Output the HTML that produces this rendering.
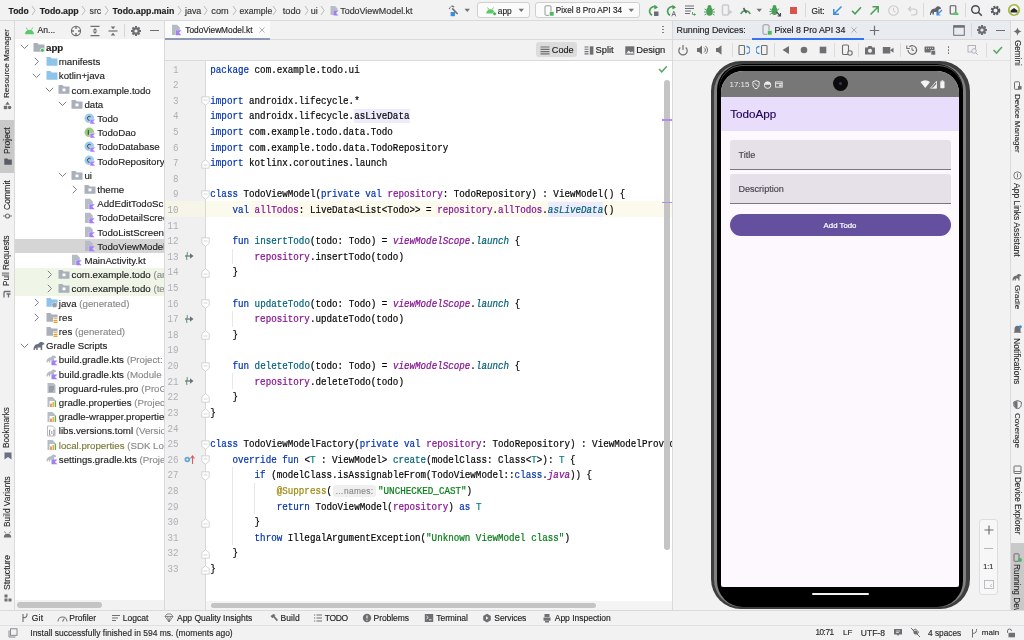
<!DOCTYPE html><html><head><meta charset="utf-8"><style>html,body{margin:0;padding:0;}body{width:1024px;height:640px;overflow:hidden;position:relative;background:#f2f2f2;font-family:"Liberation Sans",sans-serif;}</style></head><body><div style="position:absolute;left:0;top:0;width:1024px;height:640px;will-change:transform;"><div style="position:absolute;left:0px;top:0px;width:1024px;height:20px;background:#f2f2f2;"></div>
<div style="position:absolute;left:0px;top:20px;width:1024px;height:1px;background:#dadada;"></div>
<div style="position:absolute;left:0px;top:21px;width:14px;height:589px;background:#f2f2f2;"></div>
<div style="position:absolute;left:14px;top:21px;width:1px;height:589px;background:#dadada;"></div>
<div style="position:absolute;left:15px;top:21px;width:149px;height:18px;background:#f2f2f2;"></div>
<div style="position:absolute;left:15px;top:39px;width:149px;height:571px;background:#ffffff;"></div>
<div style="position:absolute;left:164px;top:21px;width:1px;height:589px;background:#dadada;"></div>
<div style="position:absolute;left:165px;top:21px;width:507px;height:18px;background:#f2f2f2;"></div>
<div style="position:absolute;left:165px;top:39px;width:507px;height:1px;background:#dadada;"></div>
<div style="position:absolute;left:165px;top:40px;width:507px;height:20px;background:#f2f2f2;"></div>
<div style="position:absolute;left:165px;top:60px;width:507px;height:1px;background:#dadada;"></div>
<div style="position:absolute;left:165px;top:61px;width:40px;height:549px;background:#f0f0f0;"></div>
<div style="position:absolute;left:205px;top:61px;width:1px;height:549px;background:#d9d9d9;"></div>
<div style="position:absolute;left:206px;top:61px;width:466px;height:549px;background:#ffffff;"></div>
<div style="position:absolute;left:672px;top:21px;width:1px;height:589px;background:#dadada;"></div>
<div style="position:absolute;left:673px;top:21px;width:337px;height:18px;background:#e8ebf0;"></div>
<div style="position:absolute;left:673px;top:39px;width:337px;height:1px;background:#dadada;"></div>
<div style="position:absolute;left:673px;top:40px;width:337px;height:20px;background:#f2f2f2;"></div>
<div style="position:absolute;left:673px;top:60px;width:337px;height:1px;background:#e2e2e2;"></div>
<div style="position:absolute;left:673px;top:61px;width:337px;height:549px;background:#f2f2f2;"></div>
<div style="position:absolute;left:1010px;top:21px;width:1px;height:589px;background:#dadada;"></div>
<div style="position:absolute;left:1011px;top:21px;width:13px;height:589px;background:#f2f2f2;"></div>
<div style="position:absolute;left:0px;top:610px;width:1024px;height:1px;background:#dadada;"></div>
<div style="position:absolute;left:0px;top:611px;width:1024px;height:14px;background:#f2f2f2;"></div>
<div style="position:absolute;left:0px;top:625px;width:1024px;height:1px;background:#e0e0e0;"></div>
<div style="position:absolute;left:0px;top:626px;width:1024px;height:14px;background:#f2f2f2;"></div>
<div style="position:absolute;left:8.6px;top:0.5999999999999996px;height:20px;line-height:20px;font-family:'Liberation Sans',sans-serif;font-size:8.5px;color:#1f1f1f;font-weight:bold;white-space:pre;-webkit-text-stroke:0.15px currentColor;">Todo</div>
<svg style="position:absolute;left:31.200000000000003px;top:4.5px;" width="5.2" height="11" viewBox="0 0 5.2 11"><polyline points="1,1 4.2,5.5 1,10" fill="none" stroke="#b4b4b4" stroke-width="0.9"/></svg>
<div style="position:absolute;left:39.8px;top:0.5999999999999996px;height:20px;line-height:20px;font-family:'Liberation Sans',sans-serif;font-size:8.8px;color:#1f1f1f;font-weight:bold;white-space:pre;-webkit-text-stroke:0.15px currentColor;">Todo.app</div>
<svg style="position:absolute;left:81.2px;top:4.5px;" width="5.2" height="11" viewBox="0 0 5.2 11"><polyline points="1,1 4.2,5.5 1,10" fill="none" stroke="#b4b4b4" stroke-width="0.9"/></svg>
<div style="position:absolute;left:89.6px;top:0.5999999999999996px;height:20px;line-height:20px;font-family:'Liberation Sans',sans-serif;font-size:8.7px;color:#333;font-weight:normal;white-space:pre;-webkit-text-stroke:0.15px currentColor;">src</div>
<svg style="position:absolute;left:103.8px;top:4.5px;" width="5.2" height="11" viewBox="0 0 5.2 11"><polyline points="1,1 4.2,5.5 1,10" fill="none" stroke="#b4b4b4" stroke-width="0.9"/></svg>
<div style="position:absolute;left:112.6px;top:0.5999999999999996px;height:20px;line-height:20px;font-family:'Liberation Sans',sans-serif;font-size:8.78px;color:#1f1f1f;font-weight:bold;white-space:pre;-webkit-text-stroke:0.15px currentColor;">Todo.app.main</div>
<svg style="position:absolute;left:177px;top:4.5px;" width="5.2" height="11" viewBox="0 0 5.2 11"><polyline points="1,1 4.2,5.5 1,10" fill="none" stroke="#b4b4b4" stroke-width="0.9"/></svg>
<div style="position:absolute;left:185px;top:0.5999999999999996px;height:20px;line-height:20px;font-family:'Liberation Sans',sans-serif;font-size:8.9px;color:#333;font-weight:normal;white-space:pre;-webkit-text-stroke:0.15px currentColor;">java</div>
<svg style="position:absolute;left:202.9px;top:4.5px;" width="5.2" height="11" viewBox="0 0 5.2 11"><polyline points="1,1 4.2,5.5 1,10" fill="none" stroke="#b4b4b4" stroke-width="0.9"/></svg>
<div style="position:absolute;left:211.3px;top:0.5999999999999996px;height:20px;line-height:20px;font-family:'Liberation Sans',sans-serif;font-size:9.2px;color:#333;font-weight:normal;white-space:pre;-webkit-text-stroke:0.15px currentColor;">com</div>
<svg style="position:absolute;left:231.7px;top:4.5px;" width="5.2" height="11" viewBox="0 0 5.2 11"><polyline points="1,1 4.2,5.5 1,10" fill="none" stroke="#b4b4b4" stroke-width="0.9"/></svg>
<div style="position:absolute;left:239.5px;top:0.5999999999999996px;height:20px;line-height:20px;font-family:'Liberation Sans',sans-serif;font-size:8.7px;color:#333;font-weight:normal;white-space:pre;-webkit-text-stroke:0.15px currentColor;">example</div>
<svg style="position:absolute;left:272px;top:4.5px;" width="5.2" height="11" viewBox="0 0 5.2 11"><polyline points="1,1 4.2,5.5 1,10" fill="none" stroke="#b4b4b4" stroke-width="0.9"/></svg>
<div style="position:absolute;left:282.7px;top:0.5999999999999996px;height:20px;line-height:20px;font-family:'Liberation Sans',sans-serif;font-size:9.3px;color:#333;font-weight:normal;white-space:pre;-webkit-text-stroke:0.15px currentColor;">todo</div>
<svg style="position:absolute;left:303.7px;top:4.5px;" width="5.2" height="11" viewBox="0 0 5.2 11"><polyline points="1,1 4.2,5.5 1,10" fill="none" stroke="#b4b4b4" stroke-width="0.9"/></svg>
<div style="position:absolute;left:310.8px;top:0.5999999999999996px;height:20px;line-height:20px;font-family:'Liberation Sans',sans-serif;font-size:9px;color:#333;font-weight:normal;white-space:pre;-webkit-text-stroke:0.15px currentColor;">ui</div>
<svg style="position:absolute;left:320.1px;top:4.5px;" width="5.2" height="11" viewBox="0 0 5.2 11"><polyline points="1,1 4.2,5.5 1,10" fill="none" stroke="#b4b4b4" stroke-width="0.9"/></svg>
<svg style="position:absolute;left:328.5px;top:4.5px;" width="10" height="11" viewBox="0 0 10 11"><path d="M1.5 1 h4.5 l2.5 2.5 v2 h-4 v4.5 h-3 z" fill="#b8bcc4"/><path d="M4.5 5.5 h5 l-2.5 2.5 l2.5 2.5 h-5 z" fill="#9f7ff0"/></svg>
<div style="position:absolute;left:340.2px;top:0.5999999999999996px;height:20px;line-height:20px;font-family:'Liberation Sans',sans-serif;font-size:8.95px;color:#333;font-weight:normal;white-space:pre;-webkit-text-stroke:0.15px currentColor;">TodoViewModel.kt</div>
<svg style="position:absolute;left:447px;top:4px;" width="13" height="13" viewBox="0 0 13 13"><path d="M1.6 4.6 L5 1.2 L7.6 2.6 L6.8 3.4 L4 2.6 L2.6 5.6 Z" fill="#6f737a"/><path d="M5.2 4.4 L10.6 10" stroke="#6f737a" stroke-width="1.7"/><rect x="3.6" y="8" width="4.4" height="4.2" fill="#3d8ee0"/></svg>
<svg style="position:absolute;left:463.5px;top:8px;" width="7" height="5" viewBox="0 0 7 5"><path d="M0.5 0.8 h5.5 l-2.75 3.2 z" fill="#6f737a"/></svg>
<div style="position:absolute;left:477.4px;top:2.4px;width:52.5px;height:15.2px;box-sizing:border-box;border:1px solid #cfcfcf;border-radius:3px;background:#fbfbfb;"></div>
<svg style="position:absolute;left:485px;top:5px;" width="12" height="11" viewBox="0 0 12 11"><path d="M1.2 8.5 a4.3 4.3 0 0 1 8.6 0 z" fill="#5cc86b"/><line x1="2.5" y1="2.5" x2="3.8" y2="4.5" stroke="#5cc86b" stroke-width="0.9"/><line x1="8.5" y1="2.5" x2="7.2" y2="4.5" stroke="#5cc86b" stroke-width="0.9"/><circle cx="9.6" cy="8.8" r="1.8" fill="#3cae4e" stroke="#fbfbfb" stroke-width="0.6"/></svg>
<div style="position:absolute;left:497.8px;top:0.5999999999999996px;height:20px;line-height:20px;font-family:'Liberation Sans',sans-serif;font-size:8.35px;color:#1f1f1f;font-weight:normal;white-space:pre;-webkit-text-stroke:0.15px currentColor;">app</div>
<svg style="position:absolute;left:517.5px;top:8px;" width="7" height="5" viewBox="0 0 7 5"><path d="M0.5 0.8 h5.5 l-2.75 3.2 z" fill="#6f737a"/></svg>
<div style="position:absolute;left:535.3px;top:2.4px;width:105px;height:15.2px;box-sizing:border-box;border:1px solid #cfcfcf;border-radius:3px;background:#fbfbfb;"></div>
<svg style="position:absolute;left:543.5px;top:4.5px;" width="11" height="12" viewBox="0 0 11 12"><rect x="1" y="0.8" width="6" height="9.5" rx="1" fill="none" stroke="#8a8e95" stroke-width="0.9"/><rect x="5.5" y="6.5" width="4.5" height="4.5" fill="#4cb85c" stroke="#fbfbfb" stroke-width="0.6"/></svg>
<div style="position:absolute;left:555.8px;top:0.5999999999999996px;height:20px;line-height:20px;font-family:'Liberation Sans',sans-serif;font-size:8.22px;color:#1f1f1f;font-weight:normal;white-space:pre;-webkit-text-stroke:0.15px currentColor;">Pixel 8 Pro API 34</div>
<svg style="position:absolute;left:628px;top:8px;" width="7" height="5" viewBox="0 0 7 5"><path d="M0.5 0.8 h5.5 l-2.75 3.2 z" fill="#6f737a"/></svg>
<svg style="position:absolute;left:647px;top:4px;" width="13" height="13" viewBox="0 0 13 13"><path d="M9.5 3.2 A4.6 4.6 0 1 0 5 11.3" fill="none" stroke="#4a9e57" stroke-width="1.6"/><path d="M7.5 0.8 l3.6 2.6 l-3.8 2 z" fill="#4a9e57"/><rect x="7" y="7.5" width="4.5" height="4.5" fill="#6a6e74"/></svg>
<svg style="position:absolute;left:665px;top:4px;" width="13" height="13" viewBox="0 0 13 13"><path d="M9.5 3.2 A4.6 4.6 0 1 0 5 11.3" fill="none" stroke="#4a9e57" stroke-width="1.6"/><path d="M7.5 0.8 l3.6 2.6 l-3.8 2 z" fill="#4a9e57"/><path d="M6.8 12.3 l2 -5 l2 5 M7.6 10.5 h2.4" fill="none" stroke="#6a6e74" stroke-width="0.9"/></svg>
<svg style="position:absolute;left:684px;top:4px;" width="13" height="13" viewBox="0 0 13 13"><path d="M1 2 h9 M1 4.5 h9 M1 7 h6 M1 9.5 h5" stroke="#6a6e74" stroke-width="1.2"/><path d="M8.5 8 v2.5 h3 M10 9.5 l1.5 1 l-1.5 1" fill="none" stroke="#4a9e57" stroke-width="0.9"/></svg>
<svg style="position:absolute;left:702.5px;top:4px;" width="13" height="13" viewBox="0 0 13 13"><ellipse cx="6.5" cy="7.5" rx="3.3" ry="4.2" fill="#4a9e57"/><circle cx="6.5" cy="3" r="2" fill="#4a9e57"/><path d="M1.5 5 l2 1.2 M11.5 5 l-2 1.2 M1 8 h2 M12 8 h-2 M1.5 11 l2 -1.2 M11.5 11 l-2 -1.2" stroke="#4a9e57" stroke-width="1"/></svg>
<svg style="position:absolute;left:720.5px;top:4px;" width="13" height="13" viewBox="0 0 13 13"><rect x="1.5" y="1" width="6" height="10" rx="1" fill="none" stroke="#c9cbcf" stroke-width="1.5"/><path d="M7 5 l4.5 3 l-4.5 3 z" fill="#c9cbcf"/></svg>
<svg style="position:absolute;left:739px;top:4px;" width="13" height="13" viewBox="0 0 13 13"><path d="M1.8 10 A5 5 0 0 1 11.2 10" fill="none" stroke="#4a9e57" stroke-width="1.6"/><path d="M4.5 4 l3 5" stroke="#55585e" stroke-width="1.6"/></svg>
<svg style="position:absolute;left:756px;top:8px;" width="7" height="5" viewBox="0 0 7 5"><path d="M0.5 0.8 h5.5 l-2.75 3.2 z" fill="#6f737a"/></svg>
<svg style="position:absolute;left:769px;top:4px;" width="13" height="13" viewBox="0 0 13 13"><ellipse cx="5.5" cy="7" rx="3" ry="4" fill="#4a9e57"/><circle cx="5.5" cy="2.8" r="1.9" fill="#4a9e57"/><path d="M0.8 4.8 l2 1.2 M10.2 4.8 l-2 1.2 M0.5 7.5 h2 M0.8 10.5 l2 -1.2" stroke="#4a9e57" stroke-width="1"/><path d="M7.5 8 l4 4 M8.5 12 h3 v-3" fill="none" stroke="#45484e" stroke-width="1.1"/></svg>
<div style="position:absolute;left:789.8px;top:6.6px;width:7px;height:7px;background:#d9544f;"></div>
<div style="position:absolute;left:805.3px;top:3px;width:1px;height:14px;background:#d9d9d9;"></div>
<div style="position:absolute;left:811.6px;top:0.5999999999999996px;height:20px;line-height:20px;font-family:'Liberation Sans',sans-serif;font-size:8.3px;color:#1f1f1f;font-weight:normal;white-space:pre;-webkit-text-stroke:0.15px currentColor;">Git:</div>
<svg style="position:absolute;left:831px;top:4px;" width="13" height="13" viewBox="0 0 13 13"><path d="M10.5 2.5 L3 10 M2.8 5 v5.2 h5.2" fill="none" stroke="#3d8ee0" stroke-width="1.5"/></svg>
<svg style="position:absolute;left:850px;top:4px;" width="13" height="13" viewBox="0 0 13 13"><path d="M2 6.8 l3 3 l6 -6.5" fill="none" stroke="#4a9e57" stroke-width="1.6"/></svg>
<svg style="position:absolute;left:867.5px;top:4px;" width="13" height="13" viewBox="0 0 13 13"><path d="M2.5 10.5 L10 3 M4.5 2.8 h5.7 v5.7" fill="none" stroke="#4a9e57" stroke-width="1.5"/></svg>
<svg style="position:absolute;left:886.5px;top:4px;" width="13" height="13" viewBox="0 0 13 13"><circle cx="6.5" cy="6.5" r="4.8" fill="none" stroke="#c8cacd" stroke-width="1.1"/><path d="M6.5 3.8 v3 l2 1.3" fill="none" stroke="#c8cacd" stroke-width="1"/></svg>
<svg style="position:absolute;left:905.5px;top:4px;" width="13" height="13" viewBox="0 0 13 13"><path d="M3 5 h5 a3 3 0 0 1 0 6 h-3" fill="none" stroke="#c8cacd" stroke-width="1.2"/><path d="M5 2.5 l-2.5 2.5 l2.5 2.5" fill="none" stroke="#c8cacd" stroke-width="1.2"/></svg>
<div style="position:absolute;left:922.8px;top:3px;width:1px;height:14px;background:#d9d9d9;"></div>
<svg style="position:absolute;left:928.5px;top:4px;" width="14" height="13" viewBox="0 0 14 13"><path d="M1 11 c0-3 1-6.5 5-6.5 l2 -2 c2 -0.5 4 0.5 4 2.5 c-1 0 -2 0 -2.5 1 v4.5 h-1.5 v-2.5 h-3 v2.5 h-1.5 v-2 c-1 0 -1.5 1 -1.5 2.5 z" fill="#5f6369"/><path d="M13 6 L8 11 M8 7.6 v3.4 h3.4" fill="none" stroke="#3d8ee0" stroke-width="1.2"/></svg>
<svg style="position:absolute;left:947px;top:4px;" width="13" height="13" viewBox="0 0 13 13"><rect x="3.2" y="1.8" width="5.6" height="8.2" rx="0.8" fill="none" stroke="#55585e" stroke-width="1.1"/><path d="M5.6 11 a3 3 0 0 1 6 0 z" fill="#5cc86b"/></svg>
<div style="position:absolute;left:965.3px;top:3px;width:1px;height:14px;background:#d9d9d9;"></div>
<svg style="position:absolute;left:970px;top:4px;" width="13" height="13" viewBox="0 0 13 13"><circle cx="5.5" cy="5.5" r="3.8" fill="none" stroke="#45484e" stroke-width="1.4"/><path d="M8.3 8.3 l3.5 3.5" stroke="#45484e" stroke-width="1.6"/></svg>
<svg style="position:absolute;left:988.5px;top:3.5px;" width="13" height="13" viewBox="0 0 13 13"><circle cx="6.5" cy="6.5" r="3.6" fill="none" stroke="#55585e" stroke-width="2.4" stroke-dasharray="1.9 1"/><circle cx="6.5" cy="6.5" r="2.7" fill="none" stroke="#55585e" stroke-width="1.3"/></svg>
<svg style="position:absolute;left:1006.8px;top:3.4px;" width="14" height="14" viewBox="0 0 14 14"><circle cx="7" cy="7" r="6.1" fill="#a3b845"/><circle cx="7" cy="7" r="4.4" fill="#f6f6f2"/><path d="M3.6 9.6 v-2 l3.4 -2.6 l3.4 2.6 v2 z" fill="#262626"/></svg>
<div style="position:absolute;left:0px;top:120px;width:14px;height:52.7px;background:#c9c9c9;"></div>
<div style="position:absolute;left:7.3px;top:97.9px;width:0;height:0;"><div style="position:absolute;left:0;top:0;transform-origin:0 0;transform:rotate(-90deg);white-space:pre;font-family:'Liberation Sans',sans-serif;font-size:8.1px;color:#2a2a2a;line-height:12px;-webkit-text-stroke:0.12px currentColor;"><div style="position:relative;top:-6px">Resource Manager</div></div></div>
<div style="position:absolute;left:7.3px;top:153.5px;width:0;height:0;"><div style="position:absolute;left:0;top:0;transform-origin:0 0;transform:rotate(-90deg);white-space:pre;font-family:'Liberation Sans',sans-serif;font-size:8.58px;color:#2a2a2a;line-height:12px;-webkit-text-stroke:0.12px currentColor;"><div style="position:relative;top:-6px">Project</div></div></div>
<div style="position:absolute;left:7.3px;top:210px;width:0;height:0;"><div style="position:absolute;left:0;top:0;transform-origin:0 0;transform:rotate(-90deg);white-space:pre;font-family:'Liberation Sans',sans-serif;font-size:8.65px;color:#2a2a2a;line-height:12px;-webkit-text-stroke:0.12px currentColor;"><div style="position:relative;top:-6px">Commit</div></div></div>
<div style="position:absolute;left:7.3px;top:286.3px;width:0;height:0;"><div style="position:absolute;left:0;top:0;transform-origin:0 0;transform:rotate(-90deg);white-space:pre;font-family:'Liberation Sans',sans-serif;font-size:8.23px;color:#2a2a2a;line-height:12px;-webkit-text-stroke:0.12px currentColor;"><div style="position:relative;top:-6px">Pull Requests</div></div></div>
<div style="position:absolute;left:7.3px;top:447.5px;width:0;height:0;"><div style="position:absolute;left:0;top:0;transform-origin:0 0;transform:rotate(-90deg);white-space:pre;font-family:'Liberation Sans',sans-serif;font-size:8.2px;color:#2a2a2a;line-height:12px;-webkit-text-stroke:0.12px currentColor;"><div style="position:relative;top:-6px">Bookmarks</div></div></div>
<div style="position:absolute;left:7.3px;top:527px;width:0;height:0;"><div style="position:absolute;left:0;top:0;transform-origin:0 0;transform:rotate(-90deg);white-space:pre;font-family:'Liberation Sans',sans-serif;font-size:8.33px;color:#2a2a2a;line-height:12px;-webkit-text-stroke:0.12px currentColor;"><div style="position:relative;top:-6px">Build Variants</div></div></div>
<div style="position:absolute;left:7.3px;top:590px;width:0;height:0;"><div style="position:absolute;left:0;top:0;transform-origin:0 0;transform:rotate(-90deg);white-space:pre;font-family:'Liberation Sans',sans-serif;font-size:8.65px;color:#2a2a2a;line-height:12px;-webkit-text-stroke:0.12px currentColor;"><div style="position:relative;top:-6px">Structure</div></div></div>
<svg style="position:absolute;left:3px;top:101px;" width="9" height="9" viewBox="0 0 9 9"><path d="M4.5 0.5 l2.2 3.3 h-4.4 z" fill="#6e6f73"/><rect x="0.8" y="4.8" width="3.4" height="3.4" fill="#6e6f73"/><circle cx="6.6" cy="6.5" r="1.8" fill="#6e6f73"/></svg>
<svg style="position:absolute;left:3.5px;top:157.5px;" width="8" height="7" viewBox="0 0 8 7"><path d="M0.3 0.5 h3 l1 1 h3.5 v5.3 h-7.5 z" fill="#5a5d63"/></svg>
<svg style="position:absolute;left:3px;top:212px;" width="9" height="8" viewBox="0 0 9 8"><circle cx="4.5" cy="4" r="2" fill="none" stroke="#6e6f73" stroke-width="1.1"/><path d="M0 4 h2.5 M6.5 4 h2.5" stroke="#6e6f73" stroke-width="1.1"/></svg>
<svg style="position:absolute;left:3px;top:289.5px;" width="9" height="8" viewBox="0 0 9 8"><path d="M1 1.5 h6.5 M1 1.5 v6 M3.5 4 h4 M5.5 4 v3.5" fill="none" stroke="#6e6f73" stroke-width="1.3"/></svg>
<svg style="position:absolute;left:3.5px;top:451.5px;" width="8" height="8" viewBox="0 0 8 8"><path d="M0.5 0.5 h7 v7 l-3.5 -2.5 l-3.5 2.5 z" fill="#6c707e"/></svg>
<svg style="position:absolute;left:3px;top:531px;" width="9" height="7" viewBox="0 0 9 7"><path d="M0.8 6.5 a3.7 3.7 0 0 1 7.4 0 z" fill="#6e6f73"/><path d="M1.5 0.5 l1.3 2 M7.5 0.5 l-1.3 2" stroke="#6e6f73" stroke-width="0.9"/></svg>
<svg style="position:absolute;left:3.5px;top:593.5px;" width="8" height="8" viewBox="0 0 8 8"><rect x="0.5" y="0.5" width="3" height="3" fill="#6e6f73"/><rect x="4.5" y="4.5" width="3" height="3" fill="#6e6f73"/><rect x="0.5" y="4.5" width="3" height="3" fill="#6e6f73"/></svg>
<svg style="position:absolute;left:23.5px;top:25.5px;" width="11" height="9" viewBox="0 0 11 9"><path d="M1 8.3 a4.5 4.5 0 0 1 9 0 z" fill="#5cc86b"/><path d="M2.2 1.5 l1.3 2.2 M8.8 1.5 l-1.3 2.2" stroke="#5cc86b" stroke-width="0.9"/></svg>
<div style="position:absolute;left:37.5px;top:20.3px;height:20px;line-height:20px;font-family:'Liberation Sans',sans-serif;font-size:8.6px;color:#2a2a2a;font-weight:normal;white-space:pre;-webkit-text-stroke:0.15px currentColor;">An...</div>
<svg style="position:absolute;left:69.5px;top:24.5px;" width="12" height="12" viewBox="0 0 12 12"><circle cx="6" cy="6" r="4.6" fill="none" stroke="#6e6f73" stroke-width="1.1"/><path d="M6 1.4 v2.6 M6 8 v2.6 M1.4 6 h2.6 M8 6 h2.6" stroke="#6e6f73" stroke-width="1.3"/></svg>
<svg style="position:absolute;left:88.5px;top:24.5px;" width="12" height="12" viewBox="0 0 12 12"><path d="M1.5 1.3 h9 M1.5 10.7 h9" stroke="#6e6f73" stroke-width="1.2"/><path d="M6 3 L8.3 5.4 H3.7 Z M3.7 6.6 H8.3 L6 9 Z" fill="#6e6f73"/></svg>
<svg style="position:absolute;left:106.5px;top:24.5px;" width="12" height="12" viewBox="0 0 12 12"><path d="M1.5 6 h9" stroke="#6e6f73" stroke-width="1.2"/><path d="M3.7 1.4 H8.3 L6 4.2 Z M6 7.8 L8.3 10.6 H3.7 Z" fill="#6e6f73"/></svg>
<div style="position:absolute;left:124.3px;top:24px;width:1px;height:13px;background:#d6d6d6;"></div>
<svg style="position:absolute;left:130px;top:24.5px;" width="12" height="12" viewBox="0 0 12 12"><rect x="5" y="1" width="2" height="2.5" fill="#6e6f73" transform="rotate(0 6 6)"/><rect x="5" y="1" width="2" height="2.5" fill="#6e6f73" transform="rotate(45 6 6)"/><rect x="5" y="1" width="2" height="2.5" fill="#6e6f73" transform="rotate(90 6 6)"/><rect x="5" y="1" width="2" height="2.5" fill="#6e6f73" transform="rotate(135 6 6)"/><rect x="5" y="1" width="2" height="2.5" fill="#6e6f73" transform="rotate(180 6 6)"/><rect x="5" y="1" width="2" height="2.5" fill="#6e6f73" transform="rotate(225 6 6)"/><rect x="5" y="1" width="2" height="2.5" fill="#6e6f73" transform="rotate(270 6 6)"/><rect x="5" y="1" width="2" height="2.5" fill="#6e6f73" transform="rotate(315 6 6)"/><circle cx="6" cy="6" r="3.8" fill="#6e6f73"/><circle cx="6" cy="6" r="1.6" fill="#f2f2f2"/></svg>
<div style="position:absolute;left:149.5px;top:30px;width:9.5px;height:1.1px;background:#6e6f73;"></div>
<div style="position:absolute;left:15px;top:39px;width:149px;height:571px;overflow:hidden;">
<div style="position:absolute;left:0;top:200.29999999999998px;width:149px;height:14.0px;background:#d5d5d5;"></div>
<div style="position:absolute;left:0;top:228.7px;width:149px;height:14.0px;background:#eff6e8;"></div>
<div style="position:absolute;left:0;top:242.89999999999998px;width:149px;height:14.0px;background:#eff6e8;"></div>
<svg style="position:absolute;left:4.600000000000001px;top:5.299999999999997px" width="9" height="6" viewBox="0 0 9 6"><polyline points="0.8,0.8 4.5,4.5 8.2,0.8" fill="none" stroke="#7e8189" stroke-width="1"/></svg>
<svg style="position:absolute;left:17.7px;top:2.799999999999997px" width="12" height="11" viewBox="0 0 12 11"><path d="M0.5 1 h4 l1.2 1.4 h5.8 v7.3 h-11 z" fill="#a9b0ba"/><circle cx="9.3" cy="8.3" r="2" fill="#4cb85c" stroke="#fff" stroke-width="0.7"/></svg>
<div style="position:absolute;left:31.0px;top:-1.0000000000000036px;height:20px;line-height:20px;font-family:'Liberation Sans',sans-serif;font-size:9.7px;color:#1e1e1e;font-weight:bold;white-space:pre;-webkit-text-stroke:0.15px currentColor;"><span style="color:#1e1e1e">app</span></div>
<svg style="position:absolute;left:18.9px;top:18.0px" width="6" height="9" viewBox="0 0 6 9"><polyline points="0.8,0.8 4.5,4.5 0.8,8.2" fill="none" stroke="#7e8189" stroke-width="1"/></svg>
<svg style="position:absolute;left:30.499999999999996px;top:17.0px" width="12" height="11" viewBox="0 0 12 11"><path d="M0.5 1 h4 l1.2 1.4 h5.8 v7.3 h-11 z" fill="#8fc4ea"/></svg>
<div style="position:absolute;left:43.8px;top:13.2px;height:20px;line-height:20px;font-family:'Liberation Sans',sans-serif;font-size:9.7px;color:#1e1e1e;font-weight:normal;white-space:pre;-webkit-text-stroke:0.15px currentColor;"><span style="color:#1e1e1e">manifests</span></div>
<svg style="position:absolute;left:17.4px;top:33.69999999999999px" width="9" height="6" viewBox="0 0 9 6"><polyline points="0.8,0.8 4.5,4.5 8.2,0.8" fill="none" stroke="#7e8189" stroke-width="1"/></svg>
<svg style="position:absolute;left:30.499999999999996px;top:31.19999999999999px" width="12" height="11" viewBox="0 0 12 11"><path d="M0.5 1 h4 l1.2 1.4 h5.8 v7.3 h-11 z" fill="#8fc4ea"/></svg>
<div style="position:absolute;left:43.8px;top:27.39999999999999px;height:20px;line-height:20px;font-family:'Liberation Sans',sans-serif;font-size:9.7px;color:#1e1e1e;font-weight:normal;white-space:pre;-webkit-text-stroke:0.15px currentColor;"><span style="color:#1e1e1e">kotlin+java</span></div>
<svg style="position:absolute;left:30.199999999999996px;top:47.89999999999999px" width="9" height="6" viewBox="0 0 9 6"><polyline points="0.8,0.8 4.5,4.5 8.2,0.8" fill="none" stroke="#7e8189" stroke-width="1"/></svg>
<svg style="position:absolute;left:43.3px;top:45.39999999999999px" width="12" height="11" viewBox="0 0 12 11"><path d="M0.5 1 h4 l1.2 1.4 h5.8 v7.3 h-11 z" fill="#a9b0ba"/><rect x="4.5" y="4.5" width="3" height="2.8" fill="#ffffff"/></svg>
<div style="position:absolute;left:56.599999999999994px;top:41.599999999999994px;height:20px;line-height:20px;font-family:'Liberation Sans',sans-serif;font-size:9.7px;color:#1e1e1e;font-weight:normal;white-space:pre;-webkit-text-stroke:0.15px currentColor;"><span style="color:#1e1e1e">com.example.todo</span></div>
<svg style="position:absolute;left:43.00000000000001px;top:62.099999999999994px" width="9" height="6" viewBox="0 0 9 6"><polyline points="0.8,0.8 4.5,4.5 8.2,0.8" fill="none" stroke="#7e8189" stroke-width="1"/></svg>
<svg style="position:absolute;left:56.10000000000001px;top:59.599999999999994px" width="12" height="11" viewBox="0 0 12 11"><path d="M0.5 1 h4 l1.2 1.4 h5.8 v7.3 h-11 z" fill="#a9b0ba"/><rect x="4.5" y="4.5" width="3" height="2.8" fill="#ffffff"/></svg>
<div style="position:absolute;left:69.4px;top:55.8px;height:20px;line-height:20px;font-family:'Liberation Sans',sans-serif;font-size:9.7px;color:#1e1e1e;font-weight:normal;white-space:pre;-webkit-text-stroke:0.15px currentColor;"><span style="color:#1e1e1e">data</span></div>
<svg style="position:absolute;left:68.9px;top:73.8px" width="12" height="12" viewBox="0 0 12 12"><circle cx="5.3" cy="5.3" r="4.8" fill="#9ccdec"/><path d="M6.6 3.7 a2 2 0 1 0 0 3.2" fill="none" stroke="#3f434a" stroke-width="1"/><path d="M6 6.2 h5.5 l-2.3 2.4 l2.3 2.4 h-5.5 z" fill="#a87ff5" stroke="#fff" stroke-width="0.5"/></svg>
<div style="position:absolute;left:82.2px;top:70.0px;height:20px;line-height:20px;font-family:'Liberation Sans',sans-serif;font-size:9.7px;color:#1e1e1e;font-weight:normal;white-space:pre;-webkit-text-stroke:0.15px currentColor;"><span style="color:#1e1e1e">Todo</span></div>
<svg style="position:absolute;left:68.9px;top:88.0px" width="12" height="12" viewBox="0 0 12 12"><circle cx="5.3" cy="5.3" r="4.8" fill="#9dcc86"/><path d="M4.3 3 v4.8" stroke="#3f434a" stroke-width="1.1"/><path d="M6 6.2 h5.5 l-2.3 2.4 l2.3 2.4 h-5.5 z" fill="#a87ff5" stroke="#fff" stroke-width="0.5"/></svg>
<div style="position:absolute;left:82.2px;top:84.2px;height:20px;line-height:20px;font-family:'Liberation Sans',sans-serif;font-size:9.7px;color:#1e1e1e;font-weight:normal;white-space:pre;-webkit-text-stroke:0.15px currentColor;"><span style="color:#1e1e1e">TodoDao</span></div>
<svg style="position:absolute;left:68.9px;top:102.19999999999999px" width="12" height="12" viewBox="0 0 12 12"><circle cx="5.3" cy="5.3" r="4.8" fill="#9ccdec"/><path d="M6.6 3.7 a2 2 0 1 0 0 3.2" fill="none" stroke="#3f434a" stroke-width="1"/><path d="M6 6.2 h5.5 l-2.3 2.4 l2.3 2.4 h-5.5 z" fill="#a87ff5" stroke="#fff" stroke-width="0.5"/></svg>
<div style="position:absolute;left:82.2px;top:98.39999999999999px;height:20px;line-height:20px;font-family:'Liberation Sans',sans-serif;font-size:9.7px;color:#1e1e1e;font-weight:normal;white-space:pre;-webkit-text-stroke:0.15px currentColor;"><span style="color:#1e1e1e">TodoDatabase</span></div>
<svg style="position:absolute;left:68.9px;top:116.39999999999998px" width="12" height="12" viewBox="0 0 12 12"><circle cx="5.3" cy="5.3" r="4.8" fill="#9ccdec"/><path d="M6.6 3.7 a2 2 0 1 0 0 3.2" fill="none" stroke="#3f434a" stroke-width="1"/><path d="M6 6.2 h5.5 l-2.3 2.4 l2.3 2.4 h-5.5 z" fill="#a87ff5" stroke="#fff" stroke-width="0.5"/></svg>
<div style="position:absolute;left:82.2px;top:112.59999999999998px;height:20px;line-height:20px;font-family:'Liberation Sans',sans-serif;font-size:9.7px;color:#1e1e1e;font-weight:normal;white-space:pre;-webkit-text-stroke:0.15px currentColor;"><span style="color:#1e1e1e">TodoRepository</span></div>
<svg style="position:absolute;left:43.00000000000001px;top:133.1px" width="9" height="6" viewBox="0 0 9 6"><polyline points="0.8,0.8 4.5,4.5 8.2,0.8" fill="none" stroke="#7e8189" stroke-width="1"/></svg>
<svg style="position:absolute;left:56.10000000000001px;top:130.6px" width="12" height="11" viewBox="0 0 12 11"><path d="M0.5 1 h4 l1.2 1.4 h5.8 v7.3 h-11 z" fill="#a9b0ba"/><rect x="4.5" y="4.5" width="3" height="2.8" fill="#ffffff"/></svg>
<div style="position:absolute;left:69.4px;top:126.79999999999998px;height:20px;line-height:20px;font-family:'Liberation Sans',sans-serif;font-size:9.7px;color:#1e1e1e;font-weight:normal;white-space:pre;-webkit-text-stroke:0.15px currentColor;"><span style="color:#1e1e1e">ui</span></div>
<svg style="position:absolute;left:57.300000000000004px;top:145.8px" width="6" height="9" viewBox="0 0 6 9"><polyline points="0.8,0.8 4.5,4.5 0.8,8.2" fill="none" stroke="#7e8189" stroke-width="1"/></svg>
<svg style="position:absolute;left:68.9px;top:144.8px" width="12" height="11" viewBox="0 0 12 11"><path d="M0.5 1 h4 l1.2 1.4 h5.8 v7.3 h-11 z" fill="#a9b0ba"/><rect x="4.5" y="4.5" width="3" height="2.8" fill="#ffffff"/></svg>
<div style="position:absolute;left:82.2px;top:141.0px;height:20px;line-height:20px;font-family:'Liberation Sans',sans-serif;font-size:9.7px;color:#1e1e1e;font-weight:normal;white-space:pre;-webkit-text-stroke:0.15px currentColor;"><span style="color:#1e1e1e">theme</span></div>
<svg style="position:absolute;left:68.9px;top:158.5px" width="12" height="12" viewBox="0 0 12 12"><path d="M1 0.8 h5 l2.8 2.8 v2.4 h-4 v5 h-3.8 z" fill="#b6bcc6"/><path d="M5.2 6.2 h5.5 l-2.5 2.5 l2.5 2.5 h-5.5 z" fill="#a27ef7"/></svg>
<div style="position:absolute;left:82.2px;top:155.2px;height:20px;line-height:20px;font-family:'Liberation Sans',sans-serif;font-size:9.7px;color:#1e1e1e;font-weight:normal;white-space:pre;-webkit-text-stroke:0.15px currentColor;"><span style="color:#1e1e1e">AddEditTodoScreen.kt</span></div>
<svg style="position:absolute;left:68.9px;top:172.7px" width="12" height="12" viewBox="0 0 12 12"><path d="M1 0.8 h5 l2.8 2.8 v2.4 h-4 v5 h-3.8 z" fill="#b6bcc6"/><path d="M5.2 6.2 h5.5 l-2.5 2.5 l2.5 2.5 h-5.5 z" fill="#a27ef7"/></svg>
<div style="position:absolute;left:82.2px;top:169.39999999999998px;height:20px;line-height:20px;font-family:'Liberation Sans',sans-serif;font-size:9.7px;color:#1e1e1e;font-weight:normal;white-space:pre;-webkit-text-stroke:0.15px currentColor;"><span style="color:#1e1e1e">TodoDetailScreen.kt</span></div>
<svg style="position:absolute;left:68.9px;top:186.89999999999998px" width="12" height="12" viewBox="0 0 12 12"><path d="M1 0.8 h5 l2.8 2.8 v2.4 h-4 v5 h-3.8 z" fill="#b6bcc6"/><path d="M5.2 6.2 h5.5 l-2.5 2.5 l2.5 2.5 h-5.5 z" fill="#a27ef7"/></svg>
<div style="position:absolute;left:82.2px;top:183.59999999999997px;height:20px;line-height:20px;font-family:'Liberation Sans',sans-serif;font-size:9.7px;color:#1e1e1e;font-weight:normal;white-space:pre;-webkit-text-stroke:0.15px currentColor;"><span style="color:#1e1e1e">TodoListScreen.kt</span></div>
<svg style="position:absolute;left:68.9px;top:201.09999999999997px" width="12" height="12" viewBox="0 0 12 12"><path d="M1 0.8 h5 l2.8 2.8 v2.4 h-4 v5 h-3.8 z" fill="#b6bcc6"/><path d="M5.2 6.2 h5.5 l-2.5 2.5 l2.5 2.5 h-5.5 z" fill="#a27ef7"/></svg>
<div style="position:absolute;left:82.2px;top:197.79999999999995px;height:20px;line-height:20px;font-family:'Liberation Sans',sans-serif;font-size:9.7px;color:#1e1e1e;font-weight:normal;white-space:pre;-webkit-text-stroke:0.15px currentColor;"><span style="color:#1e1e1e">TodoViewModel.kt</span></div>
<svg style="position:absolute;left:56.10000000000001px;top:215.3px" width="12" height="12" viewBox="0 0 12 12"><path d="M1 0.8 h5 l2.8 2.8 v2.4 h-4 v5 h-3.8 z" fill="#b6bcc6"/><path d="M5.2 6.2 h5.5 l-2.5 2.5 l2.5 2.5 h-5.5 z" fill="#a27ef7"/></svg>
<div style="position:absolute;left:69.4px;top:212.0px;height:20px;line-height:20px;font-family:'Liberation Sans',sans-serif;font-size:9.7px;color:#1e1e1e;font-weight:normal;white-space:pre;-webkit-text-stroke:0.15px currentColor;"><span style="color:#1e1e1e">MainActivity.kt</span></div>
<svg style="position:absolute;left:31.699999999999996px;top:231.0px" width="6" height="9" viewBox="0 0 6 9"><polyline points="0.8,0.8 4.5,4.5 0.8,8.2" fill="none" stroke="#7e8189" stroke-width="1"/></svg>
<svg style="position:absolute;left:43.3px;top:230.0px" width="12" height="11" viewBox="0 0 12 11"><path d="M0.5 1 h4 l1.2 1.4 h5.8 v7.3 h-11 z" fill="#a9b0ba"/><rect x="4.5" y="4.5" width="3" height="2.8" fill="#ffffff"/></svg>
<div style="position:absolute;left:56.599999999999994px;top:226.2px;height:20px;line-height:20px;font-family:'Liberation Sans',sans-serif;font-size:9.7px;color:#1e1e1e;font-weight:normal;white-space:pre;-webkit-text-stroke:0.15px currentColor;"><span style="color:#1e1e1e">com.example.todo</span><span style="color:#8a8a8a"> (androidTest)</span></div>
<svg style="position:absolute;left:31.699999999999996px;top:245.2px" width="6" height="9" viewBox="0 0 6 9"><polyline points="0.8,0.8 4.5,4.5 0.8,8.2" fill="none" stroke="#7e8189" stroke-width="1"/></svg>
<svg style="position:absolute;left:43.3px;top:244.2px" width="12" height="11" viewBox="0 0 12 11"><path d="M0.5 1 h4 l1.2 1.4 h5.8 v7.3 h-11 z" fill="#a9b0ba"/><rect x="4.5" y="4.5" width="3" height="2.8" fill="#ffffff"/></svg>
<div style="position:absolute;left:56.599999999999994px;top:240.39999999999998px;height:20px;line-height:20px;font-family:'Liberation Sans',sans-serif;font-size:9.7px;color:#1e1e1e;font-weight:normal;white-space:pre;-webkit-text-stroke:0.15px currentColor;"><span style="color:#1e1e1e">com.example.todo</span><span style="color:#8a8a8a"> (test)</span></div>
<svg style="position:absolute;left:18.9px;top:259.4px" width="6" height="9" viewBox="0 0 6 9"><polyline points="0.8,0.8 4.5,4.5 0.8,8.2" fill="none" stroke="#7e8189" stroke-width="1"/></svg>
<svg style="position:absolute;left:30.499999999999996px;top:258.4px" width="13" height="12" viewBox="0 0 13 12"><path d="M0.5 1 h4 l1.2 1.4 h5.8 v7.3 h-11 z" fill="#8fc4ea"/><circle cx="8.5" cy="8" r="2.6" fill="#9aa0aa" stroke="#fff" stroke-width="0.7" stroke-dasharray="1.2 0.6"/></svg>
<div style="position:absolute;left:43.8px;top:254.59999999999997px;height:20px;line-height:20px;font-family:'Liberation Sans',sans-serif;font-size:9.7px;color:#1e1e1e;font-weight:normal;white-space:pre;-webkit-text-stroke:0.15px currentColor;"><span style="color:#1e1e1e">java</span><span style="color:#8a8a8a"> (generated)</span></div>
<svg style="position:absolute;left:18.9px;top:273.6px" width="6" height="9" viewBox="0 0 6 9"><polyline points="0.8,0.8 4.5,4.5 0.8,8.2" fill="none" stroke="#7e8189" stroke-width="1"/></svg>
<svg style="position:absolute;left:30.499999999999996px;top:272.6px" width="13" height="12" viewBox="0 0 13 12"><path d="M0.5 1 h4 l1.2 1.4 h5.8 v7.3 h-11 z" fill="#a9b0ba"/><rect x="7" y="5.5" width="5" height="6" fill="#fff"/><path d="M7.5 6.8 h4 M7.5 8.6 h4 M7.5 10.4 h4" stroke="#e3a33a" stroke-width="1.1"/></svg>
<div style="position:absolute;left:43.8px;top:268.8px;height:20px;line-height:20px;font-family:'Liberation Sans',sans-serif;font-size:9.7px;color:#1e1e1e;font-weight:normal;white-space:pre;-webkit-text-stroke:0.15px currentColor;"><span style="color:#1e1e1e">res</span></div>
<svg style="position:absolute;left:30.499999999999996px;top:286.8px" width="13" height="12" viewBox="0 0 13 12"><path d="M0.5 1 h4 l1.2 1.4 h5.8 v7.3 h-11 z" fill="#a9b0ba"/><rect x="7" y="5.5" width="5" height="6" fill="#fff"/><path d="M7.5 6.8 h4 M7.5 8.6 h4 M7.5 10.4 h4" stroke="#e3a33a" stroke-width="1.1"/></svg>
<div style="position:absolute;left:43.8px;top:283.0px;height:20px;line-height:20px;font-family:'Liberation Sans',sans-serif;font-size:9.7px;color:#1e1e1e;font-weight:normal;white-space:pre;-webkit-text-stroke:0.15px currentColor;"><span style="color:#1e1e1e">res</span><span style="color:#8a8a8a"> (generated)</span></div>
<svg style="position:absolute;left:4.600000000000001px;top:303.5px" width="9" height="6" viewBox="0 0 9 6"><polyline points="0.8,0.8 4.5,4.5 8.2,0.8" fill="none" stroke="#7e8189" stroke-width="1"/></svg>
<svg style="position:absolute;left:17.7px;top:300.5px" width="13" height="12" viewBox="0 0 13 12"><path d="M0.5 10 c0-3 1.2-6 4.5-6 l2.3-2 c2.3 -0.5 4.2 0.6 4.2 2.6 c-0.9 0 -1.9 0 -2.3 0.9 v4.5 h-1.5 v-2.4 h-3 v2.4 h-1.5 v-1.9 c-0.9 0 -1.4 0.9 -1.4 1.9 z" fill="#6c707e"/></svg>
<div style="position:absolute;left:31.0px;top:297.2px;height:20px;line-height:20px;font-family:'Liberation Sans',sans-serif;font-size:9.7px;color:#1e1e1e;font-weight:normal;white-space:pre;-webkit-text-stroke:0.15px currentColor;"><span style="color:#1e1e1e">Gradle Scripts</span></div>
<svg style="position:absolute;left:30.499999999999996px;top:314.7px" width="13" height="12" viewBox="0 0 13 12"><path d="M0.5 8.5 c0-2.5 1-5 4-5 l2-1.8 c2 -0.4 3.6 0.5 3.6 2.2 c-0.8 0 -1.6 0 -2 0.8 v3.8 h-1.3 v-2 h-2.6 v2 h-1.3 v-1.6 c-0.8 0 -1.2 0.8 -1.2 1.6 z" fill="#b6bcc6"/><path d="M5.5 6.5 h6 l-2.6 2.4 l2.6 2.4 h-6 z" fill="#a27ef7"/></svg>
<div style="position:absolute;left:43.8px;top:311.4px;height:20px;line-height:20px;font-family:'Liberation Sans',sans-serif;font-size:9.7px;color:#1e1e1e;font-weight:normal;white-space:pre;-webkit-text-stroke:0.15px currentColor;"><span style="color:#1e1e1e">build.gradle.kts</span><span style="color:#8a8a8a"> (Project: Todo)</span></div>
<svg style="position:absolute;left:30.499999999999996px;top:328.9px" width="13" height="12" viewBox="0 0 13 12"><path d="M0.5 8.5 c0-2.5 1-5 4-5 l2-1.8 c2 -0.4 3.6 0.5 3.6 2.2 c-0.8 0 -1.6 0 -2 0.8 v3.8 h-1.3 v-2 h-2.6 v2 h-1.3 v-1.6 c-0.8 0 -1.2 0.8 -1.2 1.6 z" fill="#b6bcc6"/><path d="M5.5 6.5 h6 l-2.6 2.4 l2.6 2.4 h-6 z" fill="#a27ef7"/></svg>
<div style="position:absolute;left:43.8px;top:325.59999999999997px;height:20px;line-height:20px;font-family:'Liberation Sans',sans-serif;font-size:9.7px;color:#1e1e1e;font-weight:normal;white-space:pre;-webkit-text-stroke:0.15px currentColor;"><span style="color:#1e1e1e">build.gradle.kts</span><span style="color:#8a8a8a"> (Module :app)</span></div>
<svg style="position:absolute;left:30.499999999999996px;top:343.09999999999997px" width="12" height="12" viewBox="0 0 12 12"><path d="M1.5 1 h6 l2 2 v8 h-8 z" fill="#b6bcc6"/><path d="M3 5 h5 M3 7 h5 M3 9 h4" stroke="#6c707e" stroke-width="0.8"/></svg>
<div style="position:absolute;left:43.8px;top:339.79999999999995px;height:20px;line-height:20px;font-family:'Liberation Sans',sans-serif;font-size:9.7px;color:#1e1e1e;font-weight:normal;white-space:pre;-webkit-text-stroke:0.15px currentColor;"><span style="color:#1e1e1e">proguard-rules.pro</span><span style="color:#8a8a8a"> (ProGuard Rules for &quot;:app&quot;)</span></div>
<svg style="position:absolute;left:30.499999999999996px;top:357.3px" width="12" height="12" viewBox="0 0 12 12"><path d="M1.5 1 h5 l2.5 2.5 v1.5 h-7.5 z M1.5 5 h2 v6 h-2 z" fill="#b6bcc6"/><rect x="4.3" y="7.5" width="1.4" height="3.5" fill="#e07040"/><rect x="6.5" y="6" width="1.4" height="5" fill="#eea23a"/><rect x="8.7" y="4.5" width="1.4" height="6.5" fill="#62b543"/></svg>
<div style="position:absolute;left:43.8px;top:354.0px;height:20px;line-height:20px;font-family:'Liberation Sans',sans-serif;font-size:9.7px;color:#1e1e1e;font-weight:normal;white-space:pre;-webkit-text-stroke:0.15px currentColor;"><span style="color:#1e1e1e">gradle.properties</span><span style="color:#8a8a8a"> (Project Properties)</span></div>
<svg style="position:absolute;left:30.499999999999996px;top:371.5px" width="12" height="12" viewBox="0 0 12 12"><path d="M1.5 1 h5 l2.5 2.5 v1.5 h-7.5 z M1.5 5 h2 v6 h-2 z" fill="#b6bcc6"/><rect x="4.3" y="7.5" width="1.4" height="3.5" fill="#e07040"/><rect x="6.5" y="6" width="1.4" height="5" fill="#eea23a"/><rect x="8.7" y="4.5" width="1.4" height="6.5" fill="#62b543"/></svg>
<div style="position:absolute;left:43.8px;top:368.2px;height:20px;line-height:20px;font-family:'Liberation Sans',sans-serif;font-size:9.7px;color:#1e1e1e;font-weight:normal;white-space:pre;-webkit-text-stroke:0.15px currentColor;"><span style="color:#1e1e1e">gradle-wrapper.properties</span><span style="color:#8a8a8a"> (Gradle Version)</span></div>
<svg style="position:absolute;left:30.499999999999996px;top:385.7px" width="12" height="12" viewBox="0 0 12 12"><path d="M1.5 1 h5 l2.5 2.5 v7.5 h-7.5 z" fill="none" stroke="#b6bcc6" stroke-width="1"/><path d="M3.5 5 v5 M3.5 5 h1 M3.5 10 h1 M8 5 v5 M8 5 h-1 M8 10 h-1 M5.8 6 v3" stroke="#7d828c" stroke-width="0.8"/></svg>
<div style="position:absolute;left:43.8px;top:382.4px;height:20px;line-height:20px;font-family:'Liberation Sans',sans-serif;font-size:9.7px;color:#1e1e1e;font-weight:normal;white-space:pre;-webkit-text-stroke:0.15px currentColor;"><span style="color:#1e1e1e">libs.versions.toml</span><span style="color:#8a8a8a"> (Version Catalog)</span></div>
<svg style="position:absolute;left:30.499999999999996px;top:399.9px" width="12" height="12" viewBox="0 0 12 12"><path d="M1.5 1 h5 l2.5 2.5 v1.5 h-7.5 z M1.5 5 h2 v6 h-2 z" fill="#b6bcc6"/><rect x="4.3" y="7.5" width="1.4" height="3.5" fill="#e07040"/><rect x="6.5" y="6" width="1.4" height="5" fill="#eea23a"/><rect x="8.7" y="4.5" width="1.4" height="6.5" fill="#62b543"/></svg>
<div style="position:absolute;left:43.8px;top:396.59999999999997px;height:20px;line-height:20px;font-family:'Liberation Sans',sans-serif;font-size:9.7px;color:#1e1e1e;font-weight:normal;white-space:pre;-webkit-text-stroke:0.15px currentColor;"><span style="color:#7b7a3a">local.properties</span><span style="color:#8a8a8a"> (SDK Location)</span></div>
<svg style="position:absolute;left:30.499999999999996px;top:414.09999999999997px" width="13" height="12" viewBox="0 0 13 12"><path d="M0.5 8.5 c0-2.5 1-5 4-5 l2-1.8 c2 -0.4 3.6 0.5 3.6 2.2 c-0.8 0 -1.6 0 -2 0.8 v3.8 h-1.3 v-2 h-2.6 v2 h-1.3 v-1.6 c-0.8 0 -1.2 0.8 -1.2 1.6 z" fill="#b6bcc6"/><path d="M5.5 6.5 h6 l-2.6 2.4 l2.6 2.4 h-6 z" fill="#a27ef7"/></svg>
<div style="position:absolute;left:43.8px;top:410.79999999999995px;height:20px;line-height:20px;font-family:'Liberation Sans',sans-serif;font-size:9.7px;color:#1e1e1e;font-weight:normal;white-space:pre;-webkit-text-stroke:0.15px currentColor;"><span style="color:#1e1e1e">settings.gradle.kts</span><span style="color:#8a8a8a"> (Project Settings)</span></div>
<div style="position:absolute;left:0;top:560.8px;width:149px;height:10px;background:#f2f2f2;"></div>
<div style="position:absolute;left:2.2px;top:563px;width:84.4px;height:5.6px;border-radius:3px;background:#c4c4c4;"></div>
</div>
<div style="position:absolute;left:164.5px;top:21px;width:105.3px;height:18px;background:#fbfbfb;"></div>
<div style="position:absolute;left:164.5px;top:37.9px;width:105.3px;height:1.9px;background:#8c9ab3;"></div>
<svg style="position:absolute;left:171px;top:23.5px" width="11" height="12" viewBox="0 0 11 12"><path d="M1 0.8 h5 l2.8 2.8 v2.4 h-4 v5 h-3.8 z" fill="#b6bcc6"/><path d="M5 6.2 h5.5 l-2.5 2.5 l2.5 2.5 h-5.5 z" fill="#a27ef7"/></svg>
<div style="position:absolute;left:185.3px;top:19.9px;height:20px;line-height:20px;font-family:'Liberation Sans',sans-serif;font-size:8.3px;color:#1e1e1e;font-weight:normal;white-space:pre;-webkit-text-stroke:0.15px currentColor;">TodoViewModel.kt</div>
<svg style="position:absolute;left:258.5px;top:27px" width="6" height="6" viewBox="0 0 6 6"><path d="M0.5 0.5 L5.5 5.5 M5.5 0.5 L0.5 5.5" stroke="#a0a0a0" stroke-width="0.8"/></svg>
<div style="position:absolute;left:662.2px;top:25.95px;width:1.5px;height:1.5px;background:#6c707e;border-radius:1px;"></div>
<div style="position:absolute;left:662.2px;top:28.95px;width:1.5px;height:1.5px;background:#6c707e;border-radius:1px;"></div>
<div style="position:absolute;left:662.2px;top:31.950000000000003px;width:1.5px;height:1.5px;background:#6c707e;border-radius:1px;"></div>
<div style="position:absolute;left:536px;top:42.2px;width:40.7px;height:15.3px;background:#dcdcdc;border-radius:3px;"></div>
<svg style="position:absolute;left:540px;top:45.5px" width="10" height="9" viewBox="0 0 10 9"><path d="M0.5 1 h9 M0.5 3.3 h9 M0.5 5.6 h9 M0.5 7.9 h9" stroke="#6e6f73" stroke-width="1.2"/></svg>
<div style="position:absolute;left:551.8px;top:40px;height:20px;line-height:20px;font-family:'Liberation Sans',sans-serif;font-size:9.15px;color:#1e1e1e;font-weight:normal;white-space:pre;-webkit-text-stroke:0.15px currentColor;">Code</div>
<svg style="position:absolute;left:583.5px;top:45.5px" width="10" height="9" viewBox="0 0 10 9"><path d="M0.5 1 h4 M0.5 3.3 h4 M0.5 5.6 h4 M0.5 7.9 h4" stroke="#6e6f73" stroke-width="1.1"/><rect x="5.8" y="0.3" width="3.6" height="8.4" fill="#6e6f73"/></svg>
<div style="position:absolute;left:595.6px;top:40px;height:20px;line-height:20px;font-family:'Liberation Sans',sans-serif;font-size:9.3px;color:#1e1e1e;font-weight:normal;white-space:pre;-webkit-text-stroke:0.15px currentColor;">Split</div>
<svg style="position:absolute;left:624.5px;top:45.5px" width="10" height="9" viewBox="0 0 10 9"><rect x="0.3" y="0.3" width="9" height="8.4" fill="#6e6f73"/><path d="M1.2 7.5 l2.5 -3 l2 2 l1.5 -1.3 l1.8 2.3 z" fill="#f2f2f2"/></svg>
<div style="position:absolute;left:636.2px;top:40px;height:20px;line-height:20px;font-family:'Liberation Sans',sans-serif;font-size:9.35px;color:#1e1e1e;font-weight:normal;white-space:pre;-webkit-text-stroke:0.15px currentColor;">Design</div>
<div style="position:absolute;left:165px;top:201.2px;width:40px;height:15.4px;background:#f7f5e8;"></div>
<div style="position:absolute;left:206px;top:201.2px;width:466px;height:15.4px;background:#fcfaed;"></div>
<div style="position:absolute;left:354.21000000000004px;top:108.525px;width:55.35px;height:14.61px;background:#edebfc;"></div>
<div style="position:absolute;left:547.935px;top:202.185px;width:55.35px;height:14.61px;background:#edebfc;"></div>
<div style="position:absolute;left:173.065px;top:60.5px;height:20px;line-height:20px;font-family:'Liberation Mono',monospace;font-size:9.225px;color:#aeb0b6;transform:scaleY(1.12);">1</div>
<div style="position:absolute;left:173.065px;top:76.11px;height:20px;line-height:20px;font-family:'Liberation Mono',monospace;font-size:9.225px;color:#aeb0b6;transform:scaleY(1.12);">2</div>
<div style="position:absolute;left:173.065px;top:91.72px;height:20px;line-height:20px;font-family:'Liberation Mono',monospace;font-size:9.225px;color:#aeb0b6;transform:scaleY(1.12);">3</div>
<div style="position:absolute;left:173.065px;top:107.33px;height:20px;line-height:20px;font-family:'Liberation Mono',monospace;font-size:9.225px;color:#aeb0b6;transform:scaleY(1.12);">4</div>
<div style="position:absolute;left:173.065px;top:122.94px;height:20px;line-height:20px;font-family:'Liberation Mono',monospace;font-size:9.225px;color:#aeb0b6;transform:scaleY(1.12);">5</div>
<div style="position:absolute;left:173.065px;top:138.55px;height:20px;line-height:20px;font-family:'Liberation Mono',monospace;font-size:9.225px;color:#aeb0b6;transform:scaleY(1.12);">6</div>
<div style="position:absolute;left:173.065px;top:154.16px;height:20px;line-height:20px;font-family:'Liberation Mono',monospace;font-size:9.225px;color:#aeb0b6;transform:scaleY(1.12);">7</div>
<div style="position:absolute;left:173.065px;top:169.76999999999998px;height:20px;line-height:20px;font-family:'Liberation Mono',monospace;font-size:9.225px;color:#aeb0b6;transform:scaleY(1.12);">8</div>
<div style="position:absolute;left:173.065px;top:185.38px;height:20px;line-height:20px;font-family:'Liberation Mono',monospace;font-size:9.225px;color:#aeb0b6;transform:scaleY(1.12);">9</div>
<div style="position:absolute;left:167.53px;top:200.99px;height:20px;line-height:20px;font-family:'Liberation Mono',monospace;font-size:9.225px;color:#a6a9b0;transform:scaleY(1.12);">10</div>
<div style="position:absolute;left:167.53px;top:216.6px;height:20px;line-height:20px;font-family:'Liberation Mono',monospace;font-size:9.225px;color:#aeb0b6;transform:scaleY(1.12);">11</div>
<div style="position:absolute;left:167.53px;top:232.20999999999998px;height:20px;line-height:20px;font-family:'Liberation Mono',monospace;font-size:9.225px;color:#aeb0b6;transform:scaleY(1.12);">12</div>
<div style="position:absolute;left:167.53px;top:247.82px;height:20px;line-height:20px;font-family:'Liberation Mono',monospace;font-size:9.225px;color:#aeb0b6;transform:scaleY(1.12);">13</div>
<div style="position:absolute;left:167.53px;top:263.43px;height:20px;line-height:20px;font-family:'Liberation Mono',monospace;font-size:9.225px;color:#aeb0b6;transform:scaleY(1.12);">14</div>
<div style="position:absolute;left:167.53px;top:279.03999999999996px;height:20px;line-height:20px;font-family:'Liberation Mono',monospace;font-size:9.225px;color:#aeb0b6;transform:scaleY(1.12);">15</div>
<div style="position:absolute;left:167.53px;top:294.65px;height:20px;line-height:20px;font-family:'Liberation Mono',monospace;font-size:9.225px;color:#aeb0b6;transform:scaleY(1.12);">16</div>
<div style="position:absolute;left:167.53px;top:310.26px;height:20px;line-height:20px;font-family:'Liberation Mono',monospace;font-size:9.225px;color:#aeb0b6;transform:scaleY(1.12);">17</div>
<div style="position:absolute;left:167.53px;top:325.87px;height:20px;line-height:20px;font-family:'Liberation Mono',monospace;font-size:9.225px;color:#aeb0b6;transform:scaleY(1.12);">18</div>
<div style="position:absolute;left:167.53px;top:341.48px;height:20px;line-height:20px;font-family:'Liberation Mono',monospace;font-size:9.225px;color:#aeb0b6;transform:scaleY(1.12);">19</div>
<div style="position:absolute;left:167.53px;top:357.09px;height:20px;line-height:20px;font-family:'Liberation Mono',monospace;font-size:9.225px;color:#aeb0b6;transform:scaleY(1.12);">20</div>
<div style="position:absolute;left:167.53px;top:372.7px;height:20px;line-height:20px;font-family:'Liberation Mono',monospace;font-size:9.225px;color:#aeb0b6;transform:scaleY(1.12);">21</div>
<div style="position:absolute;left:167.53px;top:388.31px;height:20px;line-height:20px;font-family:'Liberation Mono',monospace;font-size:9.225px;color:#aeb0b6;transform:scaleY(1.12);">22</div>
<div style="position:absolute;left:167.53px;top:403.91999999999996px;height:20px;line-height:20px;font-family:'Liberation Mono',monospace;font-size:9.225px;color:#aeb0b6;transform:scaleY(1.12);">23</div>
<div style="position:absolute;left:167.53px;top:419.53px;height:20px;line-height:20px;font-family:'Liberation Mono',monospace;font-size:9.225px;color:#aeb0b6;transform:scaleY(1.12);">24</div>
<div style="position:absolute;left:167.53px;top:435.14px;height:20px;line-height:20px;font-family:'Liberation Mono',monospace;font-size:9.225px;color:#aeb0b6;transform:scaleY(1.12);">25</div>
<div style="position:absolute;left:167.53px;top:450.75px;height:20px;line-height:20px;font-family:'Liberation Mono',monospace;font-size:9.225px;color:#aeb0b6;transform:scaleY(1.12);">26</div>
<div style="position:absolute;left:167.53px;top:466.36px;height:20px;line-height:20px;font-family:'Liberation Mono',monospace;font-size:9.225px;color:#aeb0b6;transform:scaleY(1.12);">27</div>
<div style="position:absolute;left:167.53px;top:481.96999999999997px;height:20px;line-height:20px;font-family:'Liberation Mono',monospace;font-size:9.225px;color:#aeb0b6;transform:scaleY(1.12);">28</div>
<div style="position:absolute;left:167.53px;top:497.58px;height:20px;line-height:20px;font-family:'Liberation Mono',monospace;font-size:9.225px;color:#aeb0b6;transform:scaleY(1.12);">29</div>
<div style="position:absolute;left:167.53px;top:513.19px;height:20px;line-height:20px;font-family:'Liberation Mono',monospace;font-size:9.225px;color:#aeb0b6;transform:scaleY(1.12);">30</div>
<div style="position:absolute;left:167.53px;top:528.8px;height:20px;line-height:20px;font-family:'Liberation Mono',monospace;font-size:9.225px;color:#aeb0b6;transform:scaleY(1.12);">31</div>
<div style="position:absolute;left:167.53px;top:544.41px;height:20px;line-height:20px;font-family:'Liberation Mono',monospace;font-size:9.225px;color:#aeb0b6;transform:scaleY(1.12);">32</div>
<div style="position:absolute;left:167.53px;top:560.02px;height:20px;line-height:20px;font-family:'Liberation Mono',monospace;font-size:9.225px;color:#aeb0b6;transform:scaleY(1.12);">33</div>
<div style="position:absolute;left:231.5px;top:248.515px;width:0.8px;height:15.61px;background:#e8e8e8;"></div>
<div style="position:absolute;left:231.5px;top:310.955px;width:0.8px;height:15.61px;background:#e8e8e8;"></div>
<div style="position:absolute;left:231.5px;top:373.395px;width:0.8px;height:15.61px;background:#e8e8e8;"></div>
<div style="position:absolute;left:231.5px;top:467.055px;width:0.8px;height:78.05px;background:#e8e8e8;"></div>
<div style="position:absolute;left:253.7px;top:482.66499999999996px;width:0.8px;height:31.22px;background:#e8e8e8;"></div>
<div style="position:absolute;left:206px;top:61px;width:466px;height:540px;overflow:hidden;">
<div style="position:absolute;left:4.300000000000011px;top:-0.5px;height:20px;line-height:20px;font-family:'Liberation Mono',monospace;font-size:9.225px;white-space:pre;transform:scaleY(1.12);-webkit-text-stroke:0.2px currentColor;"><span style="color:#0033b3;">package</span><span style="color:#080808;"> com.example.todo.ui</span></div>
<div style="position:absolute;left:4.300000000000011px;top:30.72px;height:20px;line-height:20px;font-family:'Liberation Mono',monospace;font-size:9.225px;white-space:pre;transform:scaleY(1.12);-webkit-text-stroke:0.2px currentColor;"><span style="color:#0033b3;">import</span><span style="color:#080808;"> androidx.lifecycle.*</span></div>
<div style="position:absolute;left:4.300000000000011px;top:46.33px;height:20px;line-height:20px;font-family:'Liberation Mono',monospace;font-size:9.225px;white-space:pre;transform:scaleY(1.12);-webkit-text-stroke:0.2px currentColor;"><span style="color:#0033b3;">import</span><span style="color:#080808;"> androidx.lifecycle.asLiveData</span></div>
<div style="position:absolute;left:4.300000000000011px;top:61.94px;height:20px;line-height:20px;font-family:'Liberation Mono',monospace;font-size:9.225px;white-space:pre;transform:scaleY(1.12);-webkit-text-stroke:0.2px currentColor;"><span style="color:#0033b3;">import</span><span style="color:#080808;"> com.example.todo.data.Todo</span></div>
<div style="position:absolute;left:4.300000000000011px;top:77.55000000000001px;height:20px;line-height:20px;font-family:'Liberation Mono',monospace;font-size:9.225px;white-space:pre;transform:scaleY(1.12);-webkit-text-stroke:0.2px currentColor;"><span style="color:#0033b3;">import</span><span style="color:#080808;"> com.example.todo.data.TodoRepository</span></div>
<div style="position:absolute;left:4.300000000000011px;top:93.16px;height:20px;line-height:20px;font-family:'Liberation Mono',monospace;font-size:9.225px;white-space:pre;transform:scaleY(1.12);-webkit-text-stroke:0.2px currentColor;"><span style="color:#0033b3;">import</span><span style="color:#080808;"> kotlinx.coroutines.launch</span></div>
<div style="position:absolute;left:4.300000000000011px;top:124.38px;height:20px;line-height:20px;font-family:'Liberation Mono',monospace;font-size:9.225px;white-space:pre;transform:scaleY(1.12);-webkit-text-stroke:0.2px currentColor;"><span style="color:#0033b3;">class</span><span style="color:#080808;"> TodoViewModel(</span><span style="color:#0033b3;">private</span><span style="color:#080808;"> </span><span style="color:#0033b3;">val</span><span style="color:#080808;"> </span><span style="color:#871094;">repository</span><span style="color:#080808;">: TodoRepository) : ViewModel() {</span></div>
<div style="position:absolute;left:4.300000000000011px;top:139.99px;height:20px;line-height:20px;font-family:'Liberation Mono',monospace;font-size:9.225px;white-space:pre;transform:scaleY(1.12);-webkit-text-stroke:0.2px currentColor;"><span style="color:#080808;">    </span><span style="color:#0033b3;">val</span><span style="color:#080808;"> </span><span style="color:#871094;">allTodos</span><span style="color:#080808;">: LiveData&lt;List&lt;Todo&gt;&gt; = </span><span style="color:#871094;">repository</span><span style="color:#080808;">.</span><span style="color:#871094;">allTodos</span><span style="color:#080808;">.</span><span style="color:#00627a;font-style:italic;">asLiveData</span><span style="color:#080808;">()</span></div>
<div style="position:absolute;left:4.300000000000011px;top:171.20999999999998px;height:20px;line-height:20px;font-family:'Liberation Mono',monospace;font-size:9.225px;white-space:pre;transform:scaleY(1.12);-webkit-text-stroke:0.2px currentColor;"><span style="color:#080808;">    </span><span style="color:#0033b3;">fun</span><span style="color:#080808;"> </span><span style="color:#00627a;">insertTodo</span><span style="color:#080808;">(todo: Todo) = </span><span style="color:#871094;font-style:italic;">viewModelScope</span><span style="color:#080808;">.</span><span style="color:#00627a;font-style:italic;">launch</span><span style="color:#080808;"> {</span></div>
<div style="position:absolute;left:4.300000000000011px;top:186.82px;height:20px;line-height:20px;font-family:'Liberation Mono',monospace;font-size:9.225px;white-space:pre;transform:scaleY(1.12);-webkit-text-stroke:0.2px currentColor;"><span style="color:#080808;">        </span><span style="color:#871094;">repository</span><span style="color:#080808;">.insertTodo(todo)</span></div>
<div style="position:absolute;left:4.300000000000011px;top:202.43px;height:20px;line-height:20px;font-family:'Liberation Mono',monospace;font-size:9.225px;white-space:pre;transform:scaleY(1.12);-webkit-text-stroke:0.2px currentColor;"><span style="color:#080808;">    }</span></div>
<div style="position:absolute;left:4.300000000000011px;top:233.64999999999998px;height:20px;line-height:20px;font-family:'Liberation Mono',monospace;font-size:9.225px;white-space:pre;transform:scaleY(1.12);-webkit-text-stroke:0.2px currentColor;"><span style="color:#080808;">    </span><span style="color:#0033b3;">fun</span><span style="color:#080808;"> </span><span style="color:#00627a;">updateTodo</span><span style="color:#080808;">(todo: Todo) = </span><span style="color:#871094;font-style:italic;">viewModelScope</span><span style="color:#080808;">.</span><span style="color:#00627a;font-style:italic;">launch</span><span style="color:#080808;"> {</span></div>
<div style="position:absolute;left:4.300000000000011px;top:249.26px;height:20px;line-height:20px;font-family:'Liberation Mono',monospace;font-size:9.225px;white-space:pre;transform:scaleY(1.12);-webkit-text-stroke:0.2px currentColor;"><span style="color:#080808;">        </span><span style="color:#871094;">repository</span><span style="color:#080808;">.updateTodo(todo)</span></div>
<div style="position:absolute;left:4.300000000000011px;top:264.87px;height:20px;line-height:20px;font-family:'Liberation Mono',monospace;font-size:9.225px;white-space:pre;transform:scaleY(1.12);-webkit-text-stroke:0.2px currentColor;"><span style="color:#080808;">    }</span></div>
<div style="position:absolute;left:4.300000000000011px;top:296.09px;height:20px;line-height:20px;font-family:'Liberation Mono',monospace;font-size:9.225px;white-space:pre;transform:scaleY(1.12);-webkit-text-stroke:0.2px currentColor;"><span style="color:#080808;">    </span><span style="color:#0033b3;">fun</span><span style="color:#080808;"> </span><span style="color:#00627a;">deleteTodo</span><span style="color:#080808;">(todo: Todo) = </span><span style="color:#871094;font-style:italic;">viewModelScope</span><span style="color:#080808;">.</span><span style="color:#00627a;font-style:italic;">launch</span><span style="color:#080808;"> {</span></div>
<div style="position:absolute;left:4.300000000000011px;top:311.7px;height:20px;line-height:20px;font-family:'Liberation Mono',monospace;font-size:9.225px;white-space:pre;transform:scaleY(1.12);-webkit-text-stroke:0.2px currentColor;"><span style="color:#080808;">        </span><span style="color:#871094;">repository</span><span style="color:#080808;">.deleteTodo(todo)</span></div>
<div style="position:absolute;left:4.300000000000011px;top:327.31px;height:20px;line-height:20px;font-family:'Liberation Mono',monospace;font-size:9.225px;white-space:pre;transform:scaleY(1.12);-webkit-text-stroke:0.2px currentColor;"><span style="color:#080808;">    }</span></div>
<div style="position:absolute;left:4.300000000000011px;top:342.91999999999996px;height:20px;line-height:20px;font-family:'Liberation Mono',monospace;font-size:9.225px;white-space:pre;transform:scaleY(1.12);-webkit-text-stroke:0.2px currentColor;"><span style="color:#080808;">}</span></div>
<div style="position:absolute;left:4.300000000000011px;top:374.14px;height:20px;line-height:20px;font-family:'Liberation Mono',monospace;font-size:9.225px;white-space:pre;transform:scaleY(1.12);-webkit-text-stroke:0.2px currentColor;"><span style="color:#0033b3;">class</span><span style="color:#080808;"> TodoViewModelFactory(</span><span style="color:#0033b3;">private</span><span style="color:#080808;"> </span><span style="color:#0033b3;">val</span><span style="color:#080808;"> </span><span style="color:#871094;">repository</span><span style="color:#080808;">: TodoRepository) : ViewModelProvider.Factory {</span></div>
<div style="position:absolute;left:4.300000000000011px;top:389.75px;height:20px;line-height:20px;font-family:'Liberation Mono',monospace;font-size:9.225px;white-space:pre;transform:scaleY(1.12);-webkit-text-stroke:0.2px currentColor;"><span style="color:#080808;">    </span><span style="color:#0033b3;">override</span><span style="color:#080808;"> </span><span style="color:#0033b3;">fun</span><span style="color:#080808;"> &lt;</span><span style="color:#007e8a;">T</span><span style="color:#080808;"> : ViewModel&gt; </span><span style="color:#00627a;">create</span><span style="color:#080808;">(modelClass: Class&lt;</span><span style="color:#007e8a;">T</span><span style="color:#080808;">&gt;): </span><span style="color:#007e8a;">T</span><span style="color:#080808;"> {</span></div>
<div style="position:absolute;left:4.300000000000011px;top:405.36px;height:20px;line-height:20px;font-family:'Liberation Mono',monospace;font-size:9.225px;white-space:pre;transform:scaleY(1.12);-webkit-text-stroke:0.2px currentColor;"><span style="color:#080808;">        </span><span style="color:#0033b3;">if</span><span style="color:#080808;"> (modelClass.isAssignableFrom(TodoViewModel::</span><span style="color:#0033b3;">class</span><span style="color:#080808;">.</span><span style="color:#871094;font-style:italic;">java</span><span style="color:#080808;">)) {</span></div>
<div style="position:absolute;left:4.300000000000011px;top:420.96999999999997px;height:20px;line-height:20px;font-family:'Liberation Mono',monospace;font-size:9.225px;white-space:pre;transform:scaleY(1.12);-webkit-text-stroke:0.2px currentColor;"><span style="color:#080808;">            </span><span style="color:#9e880d;">@Suppress</span><span style="color:#080808;">(</span><span style="display:inline-block;width:46px;"></span><span style="color:#067d17;">&quot;UNCHECKED_CAST&quot;</span><span style="color:#080808;">)</span></div>
<div style="position:absolute;left:4.300000000000011px;top:436.58px;height:20px;line-height:20px;font-family:'Liberation Mono',monospace;font-size:9.225px;white-space:pre;transform:scaleY(1.12);-webkit-text-stroke:0.2px currentColor;"><span style="color:#080808;">            </span><span style="color:#0033b3;">return</span><span style="color:#080808;"> TodoViewModel(</span><span style="color:#871094;">repository</span><span style="color:#080808;">) </span><span style="color:#0033b3;">as</span><span style="color:#080808;"> </span><span style="color:#007e8a;">T</span></div>
<div style="position:absolute;left:4.300000000000011px;top:452.19000000000005px;height:20px;line-height:20px;font-family:'Liberation Mono',monospace;font-size:9.225px;white-space:pre;transform:scaleY(1.12);-webkit-text-stroke:0.2px currentColor;"><span style="color:#080808;">        }</span></div>
<div style="position:absolute;left:4.300000000000011px;top:467.79999999999995px;height:20px;line-height:20px;font-family:'Liberation Mono',monospace;font-size:9.225px;white-space:pre;transform:scaleY(1.12);-webkit-text-stroke:0.2px currentColor;"><span style="color:#080808;">        </span><span style="color:#0033b3;">throw</span><span style="color:#080808;"> IllegalArgumentException(</span><span style="color:#067d17;">&quot;Unknown ViewModel class&quot;</span><span style="color:#080808;">)</span></div>
<div style="position:absolute;left:4.300000000000011px;top:483.40999999999997px;height:20px;line-height:20px;font-family:'Liberation Mono',monospace;font-size:9.225px;white-space:pre;transform:scaleY(1.12);-webkit-text-stroke:0.2px currentColor;"><span style="color:#080808;">    }</span></div>
<div style="position:absolute;left:4.300000000000011px;top:499.02px;height:20px;line-height:20px;font-family:'Liberation Mono',monospace;font-size:9.225px;white-space:pre;transform:scaleY(1.12);-webkit-text-stroke:0.2px currentColor;"><span style="color:#080808;">}</span></div>
</div>
<div style="position:absolute;left:333px;top:484.5px;width:42.5px;height:12px;background:#efefef;border-radius:3px;"></div>
<div style="position:absolute;left:335.166px;top:481px;height:20px;line-height:20px;font-family:'Liberation Sans',sans-serif;font-size:8.4px;color:#8a8a8a;font-weight:normal;white-space:pre;-webkit-text-stroke:0.15px currentColor;letter-spacing:0.350px;">…names:</div>
<svg style="position:absolute;left:200.5px;top:96.22px" width="9" height="10" viewBox="0 0 9 10"><path d="M0.8 0.8 h7.4 v5.5 l-3.7 3 l-3.7 -3 z" fill="#ffffff" stroke="#c8c9cc" stroke-width="0.8"/><path d="M2.6 4 h3.8" stroke="#c8c9cc" stroke-width="0.8"/></svg>
<svg style="position:absolute;left:200.5px;top:189.88px" width="9" height="10" viewBox="0 0 9 10"><path d="M0.8 0.8 h7.4 v5.5 l-3.7 3 l-3.7 -3 z" fill="#ffffff" stroke="#c8c9cc" stroke-width="0.8"/><path d="M2.6 4 h3.8" stroke="#c8c9cc" stroke-width="0.8"/></svg>
<svg style="position:absolute;left:200.5px;top:236.70999999999998px" width="9" height="10" viewBox="0 0 9 10"><path d="M0.8 0.8 h7.4 v5.5 l-3.7 3 l-3.7 -3 z" fill="#ffffff" stroke="#c8c9cc" stroke-width="0.8"/><path d="M2.6 4 h3.8" stroke="#c8c9cc" stroke-width="0.8"/></svg>
<svg style="position:absolute;left:200.5px;top:299.15px" width="9" height="10" viewBox="0 0 9 10"><path d="M0.8 0.8 h7.4 v5.5 l-3.7 3 l-3.7 -3 z" fill="#ffffff" stroke="#c8c9cc" stroke-width="0.8"/><path d="M2.6 4 h3.8" stroke="#c8c9cc" stroke-width="0.8"/></svg>
<svg style="position:absolute;left:200.5px;top:361.59px" width="9" height="10" viewBox="0 0 9 10"><path d="M0.8 0.8 h7.4 v5.5 l-3.7 3 l-3.7 -3 z" fill="#ffffff" stroke="#c8c9cc" stroke-width="0.8"/><path d="M2.6 4 h3.8" stroke="#c8c9cc" stroke-width="0.8"/></svg>
<svg style="position:absolute;left:200.5px;top:439.64px" width="9" height="10" viewBox="0 0 9 10"><path d="M0.8 0.8 h7.4 v5.5 l-3.7 3 l-3.7 -3 z" fill="#ffffff" stroke="#c8c9cc" stroke-width="0.8"/><path d="M2.6 4 h3.8" stroke="#c8c9cc" stroke-width="0.8"/></svg>
<svg style="position:absolute;left:200.5px;top:455.25px" width="9" height="10" viewBox="0 0 9 10"><path d="M0.8 0.8 h7.4 v5.5 l-3.7 3 l-3.7 -3 z" fill="#ffffff" stroke="#c8c9cc" stroke-width="0.8"/><path d="M2.6 4 h3.8" stroke="#c8c9cc" stroke-width="0.8"/></svg>
<svg style="position:absolute;left:200.5px;top:470.86px" width="9" height="10" viewBox="0 0 9 10"><path d="M0.8 0.8 h7.4 v5.5 l-3.7 3 l-3.7 -3 z" fill="#ffffff" stroke="#c8c9cc" stroke-width="0.8"/><path d="M2.6 4 h3.8" stroke="#c8c9cc" stroke-width="0.8"/></svg>
<svg style="position:absolute;left:200.5px;top:158.66px" width="9" height="10" viewBox="0 0 9 10"><path d="M0.8 9.2 h7.4 v-5.5 l-3.7 -3 l-3.7 3 z" fill="#ffffff" stroke="#c8c9cc" stroke-width="0.8"/><path d="M2.6 6 h3.8" stroke="#c8c9cc" stroke-width="0.8"/></svg>
<svg style="position:absolute;left:200.5px;top:267.93px" width="9" height="10" viewBox="0 0 9 10"><path d="M0.8 9.2 h7.4 v-5.5 l-3.7 -3 l-3.7 3 z" fill="#ffffff" stroke="#c8c9cc" stroke-width="0.8"/><path d="M2.6 6 h3.8" stroke="#c8c9cc" stroke-width="0.8"/></svg>
<svg style="position:absolute;left:200.5px;top:330.37px" width="9" height="10" viewBox="0 0 9 10"><path d="M0.8 9.2 h7.4 v-5.5 l-3.7 -3 l-3.7 3 z" fill="#ffffff" stroke="#c8c9cc" stroke-width="0.8"/><path d="M2.6 6 h3.8" stroke="#c8c9cc" stroke-width="0.8"/></svg>
<svg style="position:absolute;left:200.5px;top:392.81px" width="9" height="10" viewBox="0 0 9 10"><path d="M0.8 9.2 h7.4 v-5.5 l-3.7 -3 l-3.7 3 z" fill="#ffffff" stroke="#c8c9cc" stroke-width="0.8"/><path d="M2.6 6 h3.8" stroke="#c8c9cc" stroke-width="0.8"/></svg>
<svg style="position:absolute;left:200.5px;top:408.41999999999996px" width="9" height="10" viewBox="0 0 9 10"><path d="M0.8 9.2 h7.4 v-5.5 l-3.7 -3 l-3.7 3 z" fill="#ffffff" stroke="#c8c9cc" stroke-width="0.8"/><path d="M2.6 6 h3.8" stroke="#c8c9cc" stroke-width="0.8"/></svg>
<svg style="position:absolute;left:200.5px;top:517.69px" width="9" height="10" viewBox="0 0 9 10"><path d="M0.8 9.2 h7.4 v-5.5 l-3.7 -3 l-3.7 3 z" fill="#ffffff" stroke="#c8c9cc" stroke-width="0.8"/><path d="M2.6 6 h3.8" stroke="#c8c9cc" stroke-width="0.8"/></svg>
<svg style="position:absolute;left:200.5px;top:548.91px" width="9" height="10" viewBox="0 0 9 10"><path d="M0.8 9.2 h7.4 v-5.5 l-3.7 -3 l-3.7 3 z" fill="#ffffff" stroke="#c8c9cc" stroke-width="0.8"/><path d="M2.6 6 h3.8" stroke="#c8c9cc" stroke-width="0.8"/></svg>
<svg style="position:absolute;left:200.5px;top:564.52px" width="9" height="10" viewBox="0 0 9 10"><path d="M0.8 9.2 h7.4 v-5.5 l-3.7 -3 l-3.7 3 z" fill="#ffffff" stroke="#c8c9cc" stroke-width="0.8"/><path d="M2.6 6 h3.8" stroke="#c8c9cc" stroke-width="0.8"/></svg>
<svg style="position:absolute;left:184px;top:251.32px" width="12" height="10" viewBox="0 0 12 10"><path d="M3 1 c1.5 2 -1.5 4 0 8" fill="none" stroke="#59a869" stroke-width="1.1"/><path d="M1 5 h6" stroke="#6c707e" stroke-width="1.2"/><path d="M6 2.2 l3.5 2.8 l-3.5 2.8 z" fill="#6c707e"/></svg>
<svg style="position:absolute;left:184px;top:313.76px" width="12" height="10" viewBox="0 0 12 10"><path d="M3 1 c1.5 2 -1.5 4 0 8" fill="none" stroke="#59a869" stroke-width="1.1"/><path d="M1 5 h6" stroke="#6c707e" stroke-width="1.2"/><path d="M6 2.2 l3.5 2.8 l-3.5 2.8 z" fill="#6c707e"/></svg>
<svg style="position:absolute;left:184px;top:376.2px" width="12" height="10" viewBox="0 0 12 10"><path d="M3 1 c1.5 2 -1.5 4 0 8" fill="none" stroke="#59a869" stroke-width="1.1"/><path d="M1 5 h6" stroke="#6c707e" stroke-width="1.2"/><path d="M6 2.2 l3.5 2.8 l-3.5 2.8 z" fill="#6c707e"/></svg>
<svg style="position:absolute;left:184px;top:454.25px" width="12" height="11" viewBox="0 0 12 11"><circle cx="3.3" cy="5.5" r="2.8" fill="#5fa8d3"/><circle cx="3.3" cy="5.5" r="1" fill="#fff"/><path d="M8.5 10 v-7.5 M6.5 4.5 l2 -2.5 l2 2.5" fill="none" stroke="#db5c5c" stroke-width="1.1"/></svg>
<svg style="position:absolute;left:657.5px;top:65px" width="10" height="8" viewBox="0 0 10 8"><path d="M1 4 l2.8 2.8 l5 -5.5" fill="none" stroke="#59a869" stroke-width="1.5"/></svg>
<div style="position:absolute;left:664.2px;top:80.2px;width:5.4px;height:469.5px;background:#c4c4c4;border-radius:3px;"></div>
<div style="position:absolute;left:661.6px;top:119.4px;width:10.2px;height:1.3px;background:#b28cf0;"></div>
<div style="position:absolute;left:661.6px;top:201.9px;width:10.2px;height:1.3px;background:#b28cf0;"></div>
<div style="position:absolute;left:206px;top:600.6px;width:466px;height:9.4px;background:#f4f4f4;"></div>
<div style="position:absolute;left:211.3px;top:602.5px;width:384.7px;height:5.2px;background:#c4c4c4;border-radius:3px;"></div>
<div style="position:absolute;left:676.5px;top:20.3px;height:20px;line-height:20px;font-family:'Liberation Sans',sans-serif;font-size:8.85px;color:#1e1e1e;font-weight:normal;white-space:pre;-webkit-text-stroke:0.15px currentColor;">Running Devices:</div>
<svg style="position:absolute;left:762px;top:24px" width="11" height="12" viewBox="0 0 11 12"><rect x="1" y="0.8" width="6" height="9.5" rx="1" fill="none" stroke="#8a8e95" stroke-width="0.9"/><rect x="5.5" y="6.5" width="4.5" height="4.5" fill="#4cb85c" stroke="#e8ebf0" stroke-width="0.6"/></svg>
<div style="position:absolute;left:774.4px;top:20.3px;height:20px;line-height:20px;font-family:'Liberation Sans',sans-serif;font-size:8.82px;color:#1e1e1e;font-weight:normal;white-space:pre;-webkit-text-stroke:0.15px currentColor;">Pixel 8 Pro API 34</div>
<svg style="position:absolute;left:850.5px;top:27.3px" width="6" height="6" viewBox="0 0 6 6"><path d="M0.5 0.5 L5.5 5.5 M5.5 0.5 L0.5 5.5" stroke="#a0a0a0" stroke-width="0.8"/></svg>
<div style="position:absolute;left:751.7px;top:37.6px;width:112.6px;height:2px;background:#3574f0;"></div>
<svg style="position:absolute;left:868.5px;top:25px" width="11" height="11" viewBox="0 0 11 11"><path d="M5.5 0.8 v9.4 M0.8 5.5 h9.4" stroke="#6e6f73" stroke-width="1.2"/></svg>
<svg style="position:absolute;left:952.5px;top:24.5px" width="12" height="11" viewBox="0 0 12 11"><rect x="0.7" y="0.7" width="10.6" height="9.6" fill="none" stroke="#6e6f73" stroke-width="1"/><rect x="0.7" y="0.7" width="10.6" height="2" fill="#6e6f73"/></svg>
<div style="position:absolute;left:970.5px;top:23px;width:1px;height:14px;background:#d6d8dc;"></div>
<svg style="position:absolute;left:976px;top:24.3px" width="12" height="12" viewBox="0 0 12 12"><rect x="5" y="1" width="2" height="2.5" fill="#6e6f73" transform="rotate(0 6 6)"/><rect x="5" y="1" width="2" height="2.5" fill="#6e6f73" transform="rotate(45 6 6)"/><rect x="5" y="1" width="2" height="2.5" fill="#6e6f73" transform="rotate(90 6 6)"/><rect x="5" y="1" width="2" height="2.5" fill="#6e6f73" transform="rotate(135 6 6)"/><rect x="5" y="1" width="2" height="2.5" fill="#6e6f73" transform="rotate(180 6 6)"/><rect x="5" y="1" width="2" height="2.5" fill="#6e6f73" transform="rotate(225 6 6)"/><rect x="5" y="1" width="2" height="2.5" fill="#6e6f73" transform="rotate(270 6 6)"/><rect x="5" y="1" width="2" height="2.5" fill="#6e6f73" transform="rotate(315 6 6)"/><circle cx="6" cy="6" r="3.8" fill="#6e6f73"/><circle cx="6" cy="6" r="1.6" fill="#e8ebf0"/></svg>
<div style="position:absolute;left:995.5px;top:30px;width:9.5px;height:1.1px;background:#6e6f73;"></div>
<svg style="position:absolute;left:677.2px;top:43.9px" width="12" height="12" viewBox="0 0 12 12"><path d="M3.3 3.5 a4.2 4.2 0 1 0 5.4 0" fill="none" stroke="#6e6f73" stroke-width="1.2"/><path d="M6 1 v5" stroke="#6e6f73" stroke-width="1.2"/></svg>
<svg style="position:absolute;left:695.6px;top:43.9px" width="12" height="12" viewBox="0 0 12 12"><path d="M1 4 h2 l3 -2.5 v9 l-3 -2.5 h-2 z" fill="#6e6f73"/><path d="M8 3.5 a3 3 0 0 1 0 5 M9.5 2 a5 5 0 0 1 0 8" fill="none" stroke="#6e6f73" stroke-width="1"/></svg>
<svg style="position:absolute;left:714.0px;top:43.9px" width="12" height="12" viewBox="0 0 12 12"><path d="M2 4 h2 l3.5 -2.8 v9.6 l-3.5 -2.8 h-2 z" fill="#6e6f73"/></svg>
<div style="position:absolute;left:731.5px;top:43px;width:1px;height:14px;background:#dcdcdc;"></div>
<svg style="position:absolute;left:737.8px;top:43.9px" width="12" height="12" viewBox="0 0 12 12"><rect x="1" y="1.5" width="5.5" height="9" rx="0.8" fill="none" stroke="#6e6f73" stroke-width="1.1"/><path d="M8.5 2.5 a3.5 3.5 0 0 1 0 7" fill="none" stroke="#3d8ee0" stroke-width="1.3"/></svg>
<svg style="position:absolute;left:756.3px;top:43.9px" width="12" height="12" viewBox="0 0 12 12"><rect x="5.5" y="1.5" width="5.5" height="9" rx="0.8" fill="none" stroke="#6e6f73" stroke-width="1.1"/><path d="M3.5 2.5 a3.5 3.5 0 0 0 0 7" fill="none" stroke="#3d8ee0" stroke-width="1.3"/></svg>
<div style="position:absolute;left:773.7px;top:43px;width:1px;height:14px;background:#dcdcdc;"></div>
<svg style="position:absolute;left:780.0px;top:43.9px" width="12" height="12" viewBox="0 0 12 12"><path d="M9 2 v8 l-6.5 -4 z" fill="#6e6f73"/></svg>
<svg style="position:absolute;left:797.9px;top:43.9px" width="12" height="12" viewBox="0 0 12 12"><circle cx="6" cy="6" r="3.3" fill="#6e6f73"/></svg>
<svg style="position:absolute;left:816.5px;top:43.9px" width="12" height="12" viewBox="0 0 12 12"><rect x="2.7" y="2.7" width="6.6" height="6.6" fill="#6e6f73"/></svg>
<div style="position:absolute;left:834.3px;top:43px;width:1px;height:14px;background:#dcdcdc;"></div>
<svg style="position:absolute;left:840.8px;top:43.9px" width="12" height="12" viewBox="0 0 12 12"><rect x="1.5" y="1" width="6" height="9.5" rx="1" fill="none" stroke="#6e6f73" stroke-width="1.1"/><circle cx="9" cy="9" r="2.2" fill="#f2f2f2" stroke="#6e6f73" stroke-width="1.1"/></svg>
<div style="position:absolute;left:857.6px;top:43px;width:1px;height:14px;background:#dcdcdc;"></div>
<svg style="position:absolute;left:863.6px;top:43.9px" width="12" height="12" viewBox="0 0 12 12"><path d="M1 3.5 h2.5 l1 -1.5 h3 l1 1.5 h2.5 v7 h-10 z" fill="#6e6f73"/><circle cx="6" cy="6.8" r="2" fill="#f2f2f2"/></svg>
<svg style="position:absolute;left:882.2px;top:43.9px" width="12" height="12" viewBox="0 0 12 12"><rect x="0.8" y="3" width="7.5" height="6.5" fill="#6e6f73"/><path d="M8 6.2 l3.5 -2.5 v5 z" fill="#6e6f73"/></svg>
<div style="position:absolute;left:899.7px;top:43px;width:1px;height:14px;background:#dcdcdc;"></div>
<svg style="position:absolute;left:905.5px;top:43.9px" width="12" height="12" viewBox="0 0 12 12"><path d="M2 6 a4.3 4.3 0 1 0 1.3 -3.1" fill="none" stroke="#6e6f73" stroke-width="1.2"/><path d="M0.8 1.5 v3 h3" fill="none" stroke="#6e6f73" stroke-width="1.1"/><path d="M6 3.5 v2.8 h2" fill="none" stroke="#6e6f73" stroke-width="1"/></svg>
<svg style="position:absolute;left:924.4px;top:43.9px" width="12" height="12" viewBox="0 0 12 12"><rect x="0.5" y="2.5" width="10" height="6" rx="1" fill="#6e6f73"/><path d="M2 4.3 h1 M4 4.3 h1 M6 4.3 h1 M8 4.3 h1" stroke="#f2f2f2" stroke-width="0.8"/><rect x="7" y="6.5" width="4.5" height="4.5" fill="#6e6f73" stroke="#f2f2f2" stroke-width="0.6"/></svg>
<div style="position:absolute;left:947.7px;top:46.15px;width:1.5px;height:1.5px;background:#6e6f73;border-radius:1px;"></div>
<div style="position:absolute;left:947.7px;top:49.15px;width:1.5px;height:1.5px;background:#6e6f73;border-radius:1px;"></div>
<div style="position:absolute;left:947.7px;top:52.15px;width:1.5px;height:1.5px;background:#6e6f73;border-radius:1px;"></div>
<svg style="position:absolute;left:967.0px;top:43.9px" width="12" height="12" viewBox="0 0 12 12"><rect x="1" y="1.5" width="7.5" height="6.5" fill="none" stroke="#a9adb5" stroke-width="0.9"/><circle cx="7" cy="7" r="2.3" fill="#f2f2f2" stroke="#a9adb5" stroke-width="0.9"/><path d="M8.6 8.6 l2.2 2.2" stroke="#a9adb5" stroke-width="1"/></svg>
<div style="position:absolute;left:985.9px;top:43px;width:1px;height:14px;background:#dcdcdc;"></div>
<svg style="position:absolute;left:992.1px;top:43.9px" width="12" height="12" viewBox="0 0 12 12"><path d="M1.5 6 l3 3 l5.5 -6" fill="none" stroke="#59a869" stroke-width="1.6"/></svg>
<div style="position:absolute;left:711px;top:60.8px;width:258.5px;height:548.7px;border-radius:30px;background:#3e3e3e;"></div>
<div style="position:absolute;left:714.2px;top:63.6px;width:252.1px;height:543px;border-radius:27.5px;background:#808080;"></div>
<div style="position:absolute;left:716.9px;top:63.8px;width:246.6px;height:542.8px;border-radius:26px;background:#000;"></div>
<div style="position:absolute;left:719px;top:65.3px;width:242.5px;height:537px;border-radius:24px;border-top:1.6px solid #5a5a5a;box-sizing:border-box;"></div>
<div style="position:absolute;left:721.2px;top:70.9px;width:237.9px;height:516.3px;border-radius:22px 22px 2px 2px;overflow:hidden;background:#fdf8fd;">
<div style="position:absolute;left:0;top:0;width:100%;height:26px;background:#777777;"></div>
<div style="position:absolute;left:0;top:26px;width:100%;height:34.4px;background:#e8defb;"></div>
</div>
<div style="position:absolute;left:729.5px;top:75px;height:20px;line-height:20px;font-family:'Liberation Sans',sans-serif;font-size:8.0px;color:#ececec;font-weight:normal;white-space:pre;-webkit-text-stroke:0.15px currentColor;-webkit-text-stroke:0;">17:15</div>
<svg style="position:absolute;left:751.5px;top:79.5px" width="32" height="10" viewBox="0 0 32 10"><path d="M0.9 1.7 l3.1 -1.1 l3.1 1.1 v2.9 c0 2.4 -1.6 3.6 -3.1 4.2 c-1.5 -0.6 -3.1 -1.8 -3.1 -4.2 z" fill="none" stroke="#ececec" stroke-width="1"/><path d="M2.3 3 l3.5 3.2" stroke="#ececec" stroke-width="0.9"/><circle cx="15.6" cy="5.2" r="3.2" fill="none" stroke="#ececec" stroke-width="1"/><path d="M12.4 4.8 a3.2 3.2 0 0 1 6.4 0 z" fill="#ececec"/><rect x="23.6" y="1.9" width="6.6" height="5.2" fill="none" stroke="#ececec" stroke-width="0.9"/><path d="M23.6 3.6 h6.6" stroke="#ececec" stroke-width="0.9"/><rect x="27.2" y="4.6" width="2.4" height="1.8" fill="#ececec"/></svg>
<div style="position:absolute;left:832.8px;top:75.9px;width:15px;height:15px;border-radius:50%;background:#0c0c0c;"></div>
<div style="position:absolute;left:838.8px;top:81.9px;width:3px;height:3px;border-radius:50%;background:#3a3550;"></div>
<svg style="position:absolute;left:920px;top:79.5px" width="26" height="9" viewBox="0 0 26 9"><path d="M0.5 2 a8 8 0 0 1 9.5 0 l-4.75 6 z" fill="#f4f4f4"/><path d="M10.5 8.2 l6 -7 v7 z" fill="none" stroke="#f4f4f4" stroke-width="0.8"/><path d="M12.5 8.2 l4 -4.5 v4.5 z" fill="#f4f4f4"/><rect x="20.3" y="1.2" width="4.2" height="7" rx="0.6" fill="#f4f4f4"/><rect x="21.5" y="0.3" width="1.8" height="1" fill="#f4f4f4"/></svg>
<div style="position:absolute;left:730.2px;top:104px;height:20px;line-height:20px;font-family:'Liberation Sans',sans-serif;font-size:11.7px;color:#21005d;font-weight:normal;white-space:pre;-webkit-text-stroke:0.15px currentColor;">TodoApp</div>
<div style="position:absolute;left:729.6px;top:140.3px;width:221px;height:29.2px;background:#e6e0e9;border-radius:3px 3px 0 0;"></div>
<div style="position:absolute;left:729.6px;top:168.7px;width:221px;height:0.9px;background:#7a757f;"></div>
<div style="position:absolute;left:738.5px;top:144.5px;height:20px;line-height:20px;font-family:'Liberation Sans',sans-serif;font-size:9.05px;color:#49454f;font-weight:normal;white-space:pre;-webkit-text-stroke:0.15px currentColor;">Title</div>
<div style="position:absolute;left:729.6px;top:174.4px;width:221px;height:29px;background:#e6e0e9;border-radius:3px 3px 0 0;"></div>
<div style="position:absolute;left:729.6px;top:202.6px;width:221px;height:0.9px;background:#7a757f;"></div>
<div style="position:absolute;left:738.5px;top:178.7px;height:20px;line-height:20px;font-family:'Liberation Sans',sans-serif;font-size:9.05px;color:#49454f;font-weight:normal;white-space:pre;-webkit-text-stroke:0.15px currentColor;">Description</div>
<div style="position:absolute;left:729.6px;top:214.2px;width:221px;height:21.5px;background:#65509f;border-radius:11px;"></div>
<div style="position:absolute;left:823.6px;top:215.5px;height:20px;line-height:20px;font-family:'Liberation Sans',sans-serif;font-size:7.803px;color:#ffffff;font-weight:normal;white-space:pre;-webkit-text-stroke:0.15px currentColor;-webkit-text-stroke:0.2px #ffffff;">Add Todo</div>
<div style="position:absolute;left:811.6px;top:593.2px;width:57px;height:1.6px;background:#f2f2f2;border-radius:1px;"></div>
<div style="position:absolute;left:978.6px;top:519.2px;width:19.6px;height:75.8px;box-sizing:border-box;background:#f7f7f7;border:1px solid #dedede;border-radius:3px;"></div>
<svg style="position:absolute;left:983.5px;top:524.5px" width="10" height="10" viewBox="0 0 10 10"><path d="M5 0.5 v9 M0.5 5 h9" stroke="#6e6f73" stroke-width="1.2"/></svg>
<div style="position:absolute;left:984px;top:547.6px;width:9px;height:1px;background:#b5b8be;"></div>
<div style="position:absolute;left:983.2px;top:556.6px;height:20px;line-height:20px;font-family:'Liberation Sans',sans-serif;font-size:7.2px;color:#2a2a2a;font-weight:normal;white-space:pre;-webkit-text-stroke:0.15px currentColor;">1:1</div>
<svg style="position:absolute;left:983.5px;top:580px" width="10" height="9" viewBox="0 0 10 9"><rect x="0.5" y="0.5" width="9" height="8" fill="none" stroke="#b5b8be" stroke-width="0.9"/><path d="M6 6 l2 -2 M6.5 6.5 h1.5" stroke="#b5b8be" stroke-width="0.8"/></svg>
<div style="position:absolute;left:1010.5px;top:543px;width:13.5px;height:66.8px;background:#c9c9c9;"></div>
<div style="position:absolute;left:0;top:0;width:1024px;height:610px;overflow:hidden;">
<div style="position:absolute;left:1016.9px;top:39.9px;width:0;height:0;"><div style="position:absolute;left:0;top:0;transform-origin:0 0;transform:rotate(90deg);white-space:pre;font-family:'Liberation Sans',sans-serif;font-size:8.14px;color:#2a2a2a;line-height:12px;-webkit-text-stroke:0.12px currentColor;"><div style="position:relative;top:-6px">Gemini</div></div></div>
<div style="position:absolute;left:1016.9px;top:93.8px;width:0;height:0;"><div style="position:absolute;left:0;top:0;transform-origin:0 0;transform:rotate(90deg);white-space:pre;font-family:'Liberation Sans',sans-serif;font-size:8.05px;color:#2a2a2a;line-height:12px;-webkit-text-stroke:0.12px currentColor;"><div style="position:relative;top:-6px">Device Manager</div></div></div>
<div style="position:absolute;left:1016.9px;top:182.8px;width:0;height:0;"><div style="position:absolute;left:0;top:0;transform-origin:0 0;transform:rotate(90deg);white-space:pre;font-family:'Liberation Sans',sans-serif;font-size:8.5px;color:#2a2a2a;line-height:12px;-webkit-text-stroke:0.12px currentColor;"><div style="position:relative;top:-6px">App Links Assistant</div></div></div>
<div style="position:absolute;left:1016.9px;top:285.2px;width:0;height:0;"><div style="position:absolute;left:0;top:0;transform-origin:0 0;transform:rotate(90deg);white-space:pre;font-family:'Liberation Sans',sans-serif;font-size:8.06px;color:#2a2a2a;line-height:12px;-webkit-text-stroke:0.12px currentColor;"><div style="position:relative;top:-6px">Gradle</div></div></div>
<div style="position:absolute;left:1016.9px;top:338px;width:0;height:0;"><div style="position:absolute;left:0;top:0;transform-origin:0 0;transform:rotate(90deg);white-space:pre;font-family:'Liberation Sans',sans-serif;font-size:8.52px;color:#2a2a2a;line-height:12px;-webkit-text-stroke:0.12px currentColor;"><div style="position:relative;top:-6px">Notifications</div></div></div>
<div style="position:absolute;left:1016.9px;top:412.9px;width:0;height:0;"><div style="position:absolute;left:0;top:0;transform-origin:0 0;transform:rotate(90deg);white-space:pre;font-family:'Liberation Sans',sans-serif;font-size:8.1px;color:#2a2a2a;line-height:12px;-webkit-text-stroke:0.12px currentColor;"><div style="position:relative;top:-6px">Coverage</div></div></div>
<div style="position:absolute;left:1016.9px;top:477.3px;width:0;height:0;"><div style="position:absolute;left:0;top:0;transform-origin:0 0;transform:rotate(90deg);white-space:pre;font-family:'Liberation Sans',sans-serif;font-size:8.15px;color:#2a2a2a;line-height:12px;-webkit-text-stroke:0.12px currentColor;"><div style="position:relative;top:-6px">Device Explorer</div></div></div>
<div style="position:absolute;left:1016.9px;top:564.3px;width:0;height:0;"><div style="position:absolute;left:0;top:0;transform-origin:0 0;transform:rotate(90deg);white-space:pre;font-family:'Liberation Sans',sans-serif;font-size:8.3px;color:#2a2a2a;line-height:12px;-webkit-text-stroke:0.12px currentColor;"><div style="position:relative;top:-6px">Running Devices</div></div></div>
</div>
<svg style="position:absolute;left:1012.5px;top:27.2px" width="9" height="9" viewBox="0 0 9 9"><path d="M4.5 0.3 c0.5 2.5 1.7 3.7 4.2 4.2 c-2.5 0.5 -3.7 1.7 -4.2 4.2 c-0.5 -2.5 -1.7 -3.7 -4.2 -4.2 c2.5 -0.5 3.7 -1.7 4.2 -4.2 z" fill="#6e6f73"/></svg>
<svg style="position:absolute;left:1012.5px;top:81.1px" width="9" height="9" viewBox="0 0 9 9"><rect x="1.5" y="0.8" width="5" height="7.5" rx="0.7" fill="none" stroke="#6e6f73" stroke-width="1"/><rect x="5" y="5" width="3.5" height="3.5" fill="#6e6f73"/></svg>
<svg style="position:absolute;left:1012.5px;top:171.3px" width="9" height="9" viewBox="0 0 9 9"><circle cx="4.5" cy="4.5" r="3.7" fill="none" stroke="#6e6f73" stroke-width="0.9"/><path d="M4.5 2.5 v4" stroke="#6e6f73" stroke-width="0.9"/></svg>
<svg style="position:absolute;left:1012.0px;top:272.8px" width="10" height="9" viewBox="0 0 10 9"><path d="M0.5 7.5 c0-2.5 1-4.8 3.8-4.8 l1.8-1.6 c1.8 -0.4 3.2 0.5 3.2 2 c-0.7 0 -1.4 0 -1.8 0.7 v3.7 h-1.2 v-1.9 h-2.4 v1.9 h-1.2 v-1.5 c-0.7 0 -1 0.7 -1 1.5 z" fill="#6e6f73"/></svg>
<svg style="position:absolute;left:1012.5px;top:325.3px" width="9" height="9" viewBox="0 0 9 9"><path d="M4.5 0.8 c2 0 3 1.3 3 3.3 v2.5 l1 1.2 h-8 l1 -1.2 v-2.5 c0 -2 1 -3.3 3 -3.3 z" fill="#6e6f73"/><circle cx="7.3" cy="1.8" r="1.6" fill="#3d8ee0"/></svg>
<svg style="position:absolute;left:1012.5px;top:400.3px" width="9" height="9" viewBox="0 0 9 9"><path d="M4.5 0.5 l3.8 1.5 v2.5 c0 2.5 -1.8 3.8 -3.8 4.3 c-2 -0.5 -3.8 -1.8 -3.8 -4.3 v-2.5 z" fill="none" stroke="#6e6f73" stroke-width="1"/><path d="M4.5 1 v7.5 c-1.8 -0.5 -3.3 -1.7 -3.3 -4 v-2.2 z" fill="#6e6f73"/></svg>
<svg style="position:absolute;left:1012.5px;top:464.6px" width="9" height="9" viewBox="0 0 9 9"><rect x="1" y="1" width="7" height="7.5" rx="0.8" fill="none" stroke="#6e6f73" stroke-width="1"/><path d="M1 6.5 h7" stroke="#6e6f73" stroke-width="0.9"/></svg>
<svg style="position:absolute;left:1012.5px;top:552.9px" width="9" height="9" viewBox="0 0 9 9"><rect x="1" y="0.8" width="5" height="7.5" rx="0.7" fill="none" stroke="#6e6f73" stroke-width="1"/><circle cx="7" cy="7" r="2" fill="#4cb85c"/></svg>
<svg style="position:absolute;left:20.0px;top:613.3px" width="10" height="10" viewBox="0 0 10 10"><path d="M3 1 v8 M3 3.5 c0 2 4 1.5 4 -1.5 v-1.5" fill="none" stroke="#6e6f73" stroke-width="1.1"/></svg>
<div style="position:absolute;left:31.775000000000002px;top:608.3px;height:20px;line-height:20px;font-family:'Liberation Sans',sans-serif;font-size:8.5px;color:#1e1e1e;font-weight:normal;white-space:pre;-webkit-text-stroke:0.15px currentColor;letter-spacing:0.215px;">Git</div>
<svg style="position:absolute;left:57.0px;top:613.3px" width="11" height="10" viewBox="0 0 11 10"><path d="M1 8.5 a4.5 4.5 0 0 1 9 0" fill="none" stroke="#6e6f73" stroke-width="1.1"/><path d="M5.5 8.5 l1.8 -3" stroke="#6e6f73" stroke-width="1.1"/></svg>
<div style="position:absolute;left:69.32px;top:608.3px;height:20px;line-height:20px;font-family:'Liberation Sans',sans-serif;font-size:8.5px;color:#1e1e1e;font-weight:normal;white-space:pre;-webkit-text-stroke:0.15px currentColor;letter-spacing:-0.020px;">Profiler</div>
<svg style="position:absolute;left:111.0px;top:613.3px" width="10" height="10" viewBox="0 0 10 10"><path d="M1 2.5 h8 M1 5 h6 M1 7.5 h4" stroke="#6e6f73" stroke-width="1.1"/></svg>
<div style="position:absolute;left:122.72px;top:608.3px;height:20px;line-height:20px;font-family:'Liberation Sans',sans-serif;font-size:8.5px;color:#1e1e1e;font-weight:normal;white-space:pre;-webkit-text-stroke:0.15px currentColor;letter-spacing:0.045px;">Logcat</div>
<svg style="position:absolute;left:164.0px;top:613.3px" width="10" height="10" viewBox="0 0 10 10"><path d="M1 3.5 l2 -2.5 h4 l2 2.5 l-4 5.5 z M1 3.5 h8 M3.5 3.5 l1.5 5.5 l1.5 -5.5" fill="none" stroke="#6e6f73" stroke-width="0.8"/></svg>
<div style="position:absolute;left:177.0px;top:608.3px;height:20px;line-height:20px;font-family:'Liberation Sans',sans-serif;font-size:8.5px;color:#1e1e1e;font-weight:normal;white-space:pre;-webkit-text-stroke:0.15px currentColor;letter-spacing:-0.016px;">App Quality Insights</div>
<svg style="position:absolute;left:268.5px;top:613.3px" width="10" height="10" viewBox="0 0 10 10"><path d="M1.5 3 l3 -2 l2 1 l-1 1 l3.5 4 l-1.2 1.2 l-3.5 -4 l-1 1 z" fill="#6e6f73"/></svg>
<div style="position:absolute;left:280.57px;top:608.3px;height:20px;line-height:20px;font-family:'Liberation Sans',sans-serif;font-size:8.5px;color:#1e1e1e;font-weight:normal;white-space:pre;-webkit-text-stroke:0.15px currentColor;letter-spacing:0.069px;">Build</div>
<svg style="position:absolute;left:312.5px;top:613.3px" width="10" height="10" viewBox="0 0 10 10"><path d="M1 2 h1.2 M1 5 h1.2 M1 8 h1.2 M3.5 2 h5.5 M3.5 5 h5.5 M3.5 8 h5.5" stroke="#6e6f73" stroke-width="1.1"/></svg>
<div style="position:absolute;left:324.83px;top:608.3px;height:20px;line-height:20px;font-family:'Liberation Sans',sans-serif;font-size:8.5px;color:#1e1e1e;font-weight:normal;white-space:pre;-webkit-text-stroke:0.15px currentColor;letter-spacing:-0.350px;">TODO</div>
<svg style="position:absolute;left:362.0px;top:613.3px" width="10" height="10" viewBox="0 0 10 10"><circle cx="5" cy="5" r="4.2" fill="#6e6f73"/><path d="M5 2.5 v3" stroke="#f2f2f2" stroke-width="1.1"/><circle cx="5" cy="7.2" r="0.6" fill="#f2f2f2"/></svg>
<div style="position:absolute;left:373.57px;top:608.3px;height:20px;line-height:20px;font-family:'Liberation Sans',sans-serif;font-size:8.5px;color:#1e1e1e;font-weight:normal;white-space:pre;-webkit-text-stroke:0.15px currentColor;letter-spacing:-0.062px;">Problems</div>
<svg style="position:absolute;left:423.5px;top:613.3px" width="10" height="10" viewBox="0 0 10 10"><rect x="0.8" y="1" width="8.4" height="8" fill="#6e6f73"/><path d="M2.5 3 l1.8 1.5 l-1.8 1.5 M5 6.8 h2.5" fill="none" stroke="#f2f2f2" stroke-width="0.9"/></svg>
<div style="position:absolute;left:436.33px;top:608.3px;height:20px;line-height:20px;font-family:'Liberation Sans',sans-serif;font-size:8.5px;color:#1e1e1e;font-weight:normal;white-space:pre;-webkit-text-stroke:0.15px currentColor;letter-spacing:-0.088px;">Terminal</div>
<svg style="position:absolute;left:482.0px;top:613.3px" width="10" height="10" viewBox="0 0 10 10"><path d="M5 0.8 l3.8 2.2 v4.2 l-3.8 2.2 l-3.8 -2.2 v-4.2 z" fill="#6e6f73"/><path d="M4 3.2 l2.5 1.8 l-2.5 1.8 z" fill="#f2f2f2"/></svg>
<div style="position:absolute;left:494.3675px;top:608.3px;height:20px;line-height:20px;font-family:'Liberation Sans',sans-serif;font-size:8.5px;color:#1e1e1e;font-weight:normal;white-space:pre;-webkit-text-stroke:0.15px currentColor;letter-spacing:-0.095px;">Services</div>
<svg style="position:absolute;left:541.5px;top:613.3px" width="10" height="10" viewBox="0 0 10 10"><rect x="2.5" y="1" width="5" height="3" fill="#6e6f73"/><rect x="1.5" y="4.5" width="7" height="3.2" fill="#6e6f73"/><rect x="3" y="8" width="4" height="1.5" fill="#6e6f73"/></svg>
<div style="position:absolute;left:554.75px;top:608.3px;height:20px;line-height:20px;font-family:'Liberation Sans',sans-serif;font-size:8.5px;color:#1e1e1e;font-weight:normal;white-space:pre;-webkit-text-stroke:0.15px currentColor;letter-spacing:-0.017px;">App Inspection</div>
<svg style="position:absolute;left:8px;top:627.5px" width="10" height="10" viewBox="0 0 10 10"><rect x="2.5" y="0.8" width="6.5" height="6.5" fill="none" stroke="#7d8088" stroke-width="0.9"/><path d="M1 2.5 v6.5 h6.5" fill="none" stroke="#7d8088" stroke-width="0.9"/></svg>
<div style="position:absolute;left:30.3px;top:622.6px;height:20px;line-height:20px;font-family:'Liberation Sans',sans-serif;font-size:8.47px;color:#2a2a2a;font-weight:normal;white-space:pre;-webkit-text-stroke:0.15px currentColor;">Install successfully finished in 594 ms. (moments ago)</div>
<div style="position:absolute;left:815.5px;top:622.6px;height:20px;line-height:20px;font-family:'Liberation Sans',sans-serif;font-size:8.2px;color:#2a2a2a;font-weight:normal;white-space:pre;-webkit-text-stroke:0.15px currentColor;letter-spacing:-0.5px;">10:71</div>
<div style="position:absolute;left:843px;top:622.6px;height:20px;line-height:20px;font-family:'Liberation Sans',sans-serif;font-size:8.0px;color:#2a2a2a;font-weight:normal;white-space:pre;-webkit-text-stroke:0.15px currentColor;">LF</div>
<div style="position:absolute;left:860.8px;top:622.6px;height:20px;line-height:20px;font-family:'Liberation Sans',sans-serif;font-size:8.5px;color:#2a2a2a;font-weight:normal;white-space:pre;-webkit-text-stroke:0.15px currentColor;">UTF-8</div>
<svg style="position:absolute;left:893px;top:628px" width="10" height="9" viewBox="0 0 10 9"><path d="M1 1 h8 v5.5 h-3 l-1 1.5 l-1 -1.5 h-3 z" fill="#6e6f73"/><path d="M3 3 h4 M3 4.5 h3" stroke="#f2f2f2" stroke-width="0.7"/></svg>
<svg style="position:absolute;left:909.5px;top:627px" width="11" height="11" viewBox="0 0 11 11"><path d="M1 1 l9 9 M3 3.5 l2.5 -1.5 l3 3 l-1.5 2.5 z" fill="none" stroke="#6e6f73" stroke-width="1"/><circle cx="5.5" cy="5.5" r="2" fill="#6e6f73"/></svg>
<div style="position:absolute;left:928px;top:622.6px;height:20px;line-height:20px;font-family:'Liberation Sans',sans-serif;font-size:8.32px;color:#2a2a2a;font-weight:normal;white-space:pre;-webkit-text-stroke:0.15px currentColor;">4 spaces</div>
<svg style="position:absolute;left:970px;top:627.5px" width="9" height="10" viewBox="0 0 9 10"><path d="M2.5 1 v8.5 M2.5 4.5 c0 1.5 4 1 4 -2 v-1.5" fill="none" stroke="#6e6f73" stroke-width="1"/></svg>
<div style="position:absolute;left:981.8px;top:622.6px;height:20px;line-height:20px;font-family:'Liberation Sans',sans-serif;font-size:8.0px;color:#2a2a2a;font-weight:normal;white-space:pre;-webkit-text-stroke:0.15px currentColor;">main</div>
<svg style="position:absolute;left:1006px;top:627.5px" width="10" height="10" viewBox="0 0 10 10"><rect x="2.5" y="4.8" width="6.5" height="4.5" fill="#6e6f73"/><path d="M1.5 4.8 v-1.8 a2 2 0 0 1 4 0" fill="none" stroke="#6e6f73" stroke-width="1"/></svg></div></body></html>
